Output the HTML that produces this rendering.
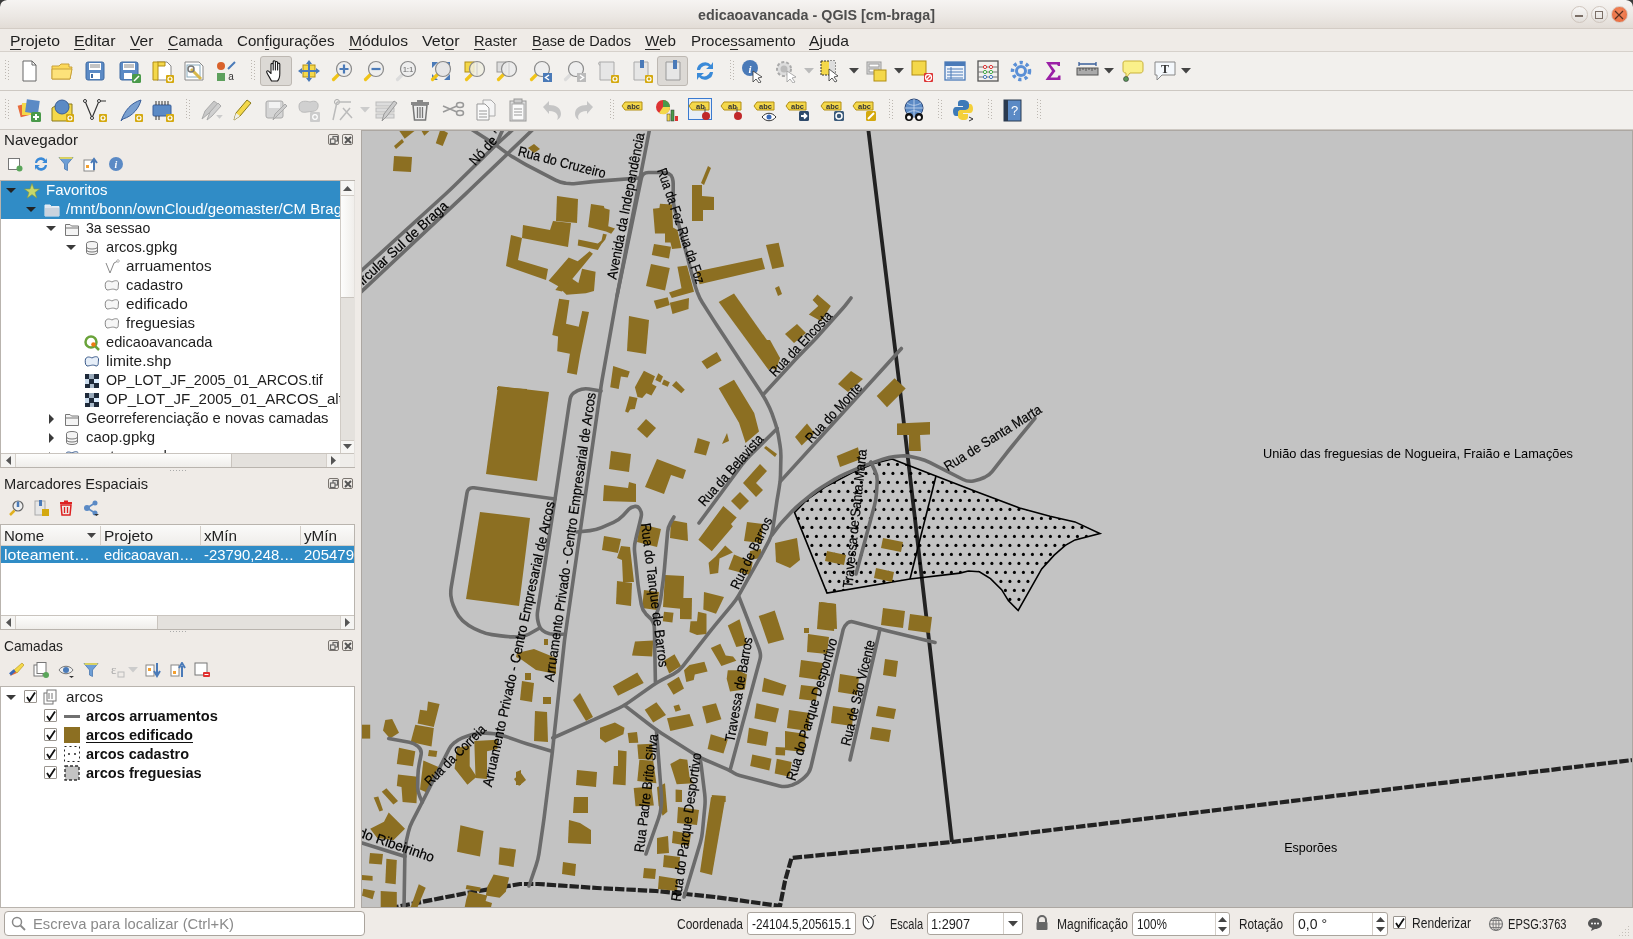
<!DOCTYPE html>
<html><head><meta charset="utf-8">
<style>
*{margin:0;padding:0;box-sizing:border-box}
html,body{width:1633px;height:939px;overflow:hidden;background:#efebe7;font-family:"Liberation Sans",sans-serif;position:relative}
#root{position:absolute;left:0;top:0;width:1633px;height:939px;will-change:transform}
.a{position:absolute}
.t{position:absolute;white-space:nowrap}
svg text{}
</style></head><body>
<div id="root"><div class="a" style="left:0;top:0;width:1633px;height:29px;background:linear-gradient(#f6f4f2,#ebe7e3 60%,#e2dcd6);border-bottom:1px solid #d3ccc5"></div><div class="t" style="left:698px;top:6.82px;font-size:15px;line-height:16.75px;font-weight:bold;color:#4d4d4d;transform:scaleX(0.9540);transform-origin:0 0;">edicaoavancada - QGIS [cm-braga]</div><svg class="a" style="left:0;top:0" width="7" height="7"><path d="M0 0 H7 Q0.5 0.5 0 7 Z" fill="#3a3a3a"/></svg><svg class="a" style="left:1626px;top:0" width="7" height="7"><path d="M7 0 H0 Q6.5 0.5 7 7 Z" fill="#3a3a3a"/></svg><div class="a" style="left:1570.5px;top:6px;width:17px;height:17px;border-radius:50%;background:linear-gradient(#f7f6f5,#e3dfdb);border:1px solid #cfc5bd"></div><div class="a" style="left:1575px;top:15px;width:8px;height:2px;background:#7a6e66"></div><div class="a" style="left:1590.5px;top:6px;width:17px;height:17px;border-radius:50%;background:linear-gradient(#f7f6f5,#e3dfdb);border:1px solid #cfc5bd"></div><div class="a" style="left:1595px;top:11px;width:8px;height:8px;border:1.5px solid #7a6e66"></div><div class="a" style="left:1610.5px;top:6px;width:17px;height:17px;border-radius:50%;background:radial-gradient(circle at 50% 40%,#f58a5e,#e5663a);border:1px solid #d9c9bf"></div><svg class="a" style="left:1614px;top:10px" width="10" height="10"><path d="M1 1 L9 9 M9 1 L1 9" stroke="#5a3020" stroke-width="1.2"/></svg><div class="a" style="left:0;top:29px;width:1633px;height:23px;background:#efebe7;border-bottom:1px solid #d6d1cb"></div><div class="t" style="left:10px;top:33.32px;font-size:15px;line-height:16.75px;color:#1e1e1e;transform:scaleX(1.0520);transform-origin:0 0;">Projeto</div><div class="a" style="left:10.0px;top:48.6px;width:10.5px;height:1.6px;background:#2b2b2b"></div><div class="t" style="left:74px;top:33.32px;font-size:15px;line-height:16.75px;color:#1e1e1e;transform:scaleX(1.0590);transform-origin:0 0;">Editar</div><div class="a" style="left:74.0px;top:48.6px;width:10.6px;height:1.6px;background:#2b2b2b"></div><div class="t" style="left:129.6px;top:33.32px;font-size:15px;line-height:16.75px;color:#1e1e1e;transform:scaleX(1.0392);transform-origin:0 0;">Ver</div><div class="a" style="left:129.6px;top:48.6px;width:10.4px;height:1.6px;background:#2b2b2b"></div><div class="t" style="left:168px;top:33.32px;font-size:15px;line-height:16.75px;color:#1e1e1e;transform:scaleX(0.9612);transform-origin:0 0;">Camada</div><div class="a" style="left:168.0px;top:48.6px;width:10.4px;height:1.6px;background:#2b2b2b"></div><div class="t" style="left:237px;top:33.32px;font-size:15px;line-height:16.75px;color:#1e1e1e;transform:scaleX(1.0080);transform-origin:0 0;">Configurações</div><div class="a" style="left:264.7px;top:48.6px;width:4.2px;height:1.6px;background:#2b2b2b"></div><div class="t" style="left:349px;top:33.32px;font-size:15px;line-height:16.75px;color:#1e1e1e;transform:scaleX(1.0406);transform-origin:0 0;">Módulos</div><div class="a" style="left:349.0px;top:48.6px;width:13.0px;height:1.6px;background:#2b2b2b"></div><div class="t" style="left:422px;top:33.32px;font-size:15px;line-height:16.75px;color:#1e1e1e;transform:scaleX(1.0706);transform-origin:0 0;">Vetor</div><div class="a" style="left:445.2px;top:48.6px;width:8.9px;height:1.6px;background:#2b2b2b"></div><div class="t" style="left:474px;top:33.32px;font-size:15px;line-height:16.75px;color:#1e1e1e;transform:scaleX(0.9733);transform-origin:0 0;">Raster</div><div class="a" style="left:474.0px;top:48.6px;width:10.5px;height:1.6px;background:#2b2b2b"></div><div class="t" style="left:532px;top:33.32px;font-size:15px;line-height:16.75px;color:#1e1e1e;transform:scaleX(0.9652);transform-origin:0 0;">Base de Dados</div><div class="a" style="left:532.0px;top:48.6px;width:9.7px;height:1.6px;background:#2b2b2b"></div><div class="t" style="left:645.4px;top:33.32px;font-size:15px;line-height:16.75px;color:#1e1e1e;transform:scaleX(1.0140);transform-origin:0 0;">Web</div><div class="a" style="left:645.4px;top:48.6px;width:14.4px;height:1.6px;background:#2b2b2b"></div><div class="t" style="left:691px;top:33.32px;font-size:15px;line-height:16.75px;color:#1e1e1e;transform:scaleX(1.0037);transform-origin:0 0;">Processamento</div><div class="a" style="left:730.3px;top:48.6px;width:7.5px;height:1.6px;background:#2b2b2b"></div><div class="t" style="left:809px;top:33.32px;font-size:15px;line-height:16.75px;color:#1e1e1e;transform:scaleX(1.0426);transform-origin:0 0;">Ajuda</div><div class="a" style="left:809.0px;top:48.6px;width:10.4px;height:1.6px;background:#2b2b2b"></div><div class="a" style="left:0;top:52px;width:1633px;height:39px;background:#f2f0ed;border-bottom:1px solid #cdc8c2"></div><div class="a" style="left:0;top:91px;width:1633px;height:39px;background:#f2f0ed;border-bottom:1px solid #cdc8c2"></div><div class="a" style="left:260px;top:56px;width:32px;height:30px;background:#dcd9d5;border:1px solid #bdb8b2;border-radius:3px"></div><div class="a" style="left:657px;top:56px;width:31px;height:30px;background:#dcd9d5;border:1px solid #bdb8b2;border-radius:3px"></div><div class="a" style="left:688px;top:98px;width:24px;height:22px;background:#e8eef6;border:1px solid #3a7ad0"></div><svg class="a" style="left:17.0px;top:58.5px" width="24" height="24" viewBox="0 0 24 24"><path d="M6 2 H15 L19 6 V22 H6 Z" fill="#fff" stroke="#666" stroke-width="1"/><path d="M15 2 V6 H19" fill="none" stroke="#666"/></svg><svg class="a" style="left:50.0px;top:58.5px" width="24" height="24" viewBox="0 0 24 24"><path d="M2 7 H9 L11 5 H19 V8 H22 L20 20 H2 Z" fill="#fcd95a" stroke="#c9a23a" stroke-width="1"/><path d="M2 10 H22 L20 20 H2 Z" fill="#fde27a" stroke="#c9a23a" stroke-width="1"/></svg><svg class="a" style="left:83.0px;top:58.5px" width="24" height="24" viewBox="0 0 24 24"><rect x="3" y="3" width="18" height="18" rx="2" fill="#5b8ac5" stroke="#3e6aa3"/><rect x="6" y="4" width="12" height="7" fill="#fff"/><line x1="7" y1="6" x2="17" y2="6" stroke="#888"/><line x1="7" y1="8" x2="17" y2="8" stroke="#888"/><rect x="7" y="14" width="10" height="6" fill="#fff"/><rect x="8" y="15" width="2" height="4" fill="#3e6aa3"/></svg><svg class="a" style="left:116.6px;top:58.5px" width="24" height="24" viewBox="0 0 24 24"><rect x="3" y="3" width="18" height="18" rx="2" fill="#5b8ac5" stroke="#3e6aa3"/><rect x="6" y="4" width="12" height="7" fill="#fff"/><line x1="7" y1="6" x2="17" y2="6" stroke="#888"/><line x1="7" y1="8" x2="17" y2="8" stroke="#888"/><rect x="7" y="14" width="8" height="6" fill="#fff"/><rect x="15" y="15" width="9" height="9" rx="1.5" fill="#4a9a4a"/><line x1="17" y1="22" x2="22" y2="17" stroke="#fff" stroke-width="1.5"/></svg><svg class="a" style="left:149.5px;top:58.5px" width="24" height="24" viewBox="0 0 24 24"><path d="M7 3 H17 L21 7 V21 H7 Z" fill="#fff" stroke="#888"/><path d="M3 3 H8 V21 H3 Z M8 3 H15 V7 H8" fill="#f4d84a" stroke="#b28e12"/><rect x="16" y="16" width="8" height="8" rx="1" fill="#d4a90f"/><circle cx="20" cy="20" r="2" fill="none" stroke="#fff" stroke-width="1.2"/></svg><svg class="a" style="left:182.0px;top:58.5px" width="24" height="24" viewBox="0 0 24 24"><path d="M3 3 H17 L21 7 V21 H3 Z" fill="#fff" stroke="#888"/><rect x="5" y="6" width="13" height="12" fill="none" stroke="#8ab"/><line x1="9" y1="10" x2="19" y2="20" stroke="#d8b84a" stroke-width="3"/><circle cx="9" cy="10" r="3" fill="none" stroke="#777" stroke-width="1.5"/></svg><svg class="a" style="left:214.0px;top:58.5px" width="24" height="24" viewBox="0 0 24 24"><circle cx="7" cy="7" r="4" fill="#d9622b"/><line x1="14" y1="10" x2="21" y2="3" stroke="#4a7ab8" stroke-width="2"/><rect x="3" y="14" width="8" height="8" fill="#5da05d"/><text x="17" y="21" font-size="10" fill="#333" text-anchor="middle" font-family="Liberation Sans">a</text></svg><svg class="a" style="left:263.7px;top:58.5px" width="24" height="24" viewBox="0 0 24 24"><path d="M7.5 22 C6 19 4 16 2.8 13.5 C2.2 12.2 3.6 11.2 4.8 12.3 L7 14.5 V5.5 C7 4 9.2 4 9.2 5.5 V11 V2.8 C9.2 1.3 11.4 1.3 11.4 2.8 V11 V3.6 C11.4 2.1 13.6 2.1 13.6 3.6 V11 V5.2 C13.6 3.8 15.8 3.8 15.8 5.2 V14.5 C15.8 18 15 20.5 13.5 22 Z" fill="#fff" stroke="#1a1a1a" stroke-width="1.1" stroke-linejoin="round"/></svg><svg class="a" style="left:296.6px;top:58.5px" width="24" height="24" viewBox="0 0 24 24"><rect x="6" y="6" width="12" height="12" fill="#f4d84a" stroke="#b28e12"/><path d="M12 1 L15 5 H9 Z M12 23 L15 19 H9 Z M1 12 L5 9 V15 Z M23 12 L19 9 V15 Z" fill="#4a7ab8"/><path d="M12 4 V20 M4 12 H20" stroke="#4a7ab8" stroke-width="2"/></svg><svg class="a" style="left:329.6px;top:58.5px" width="24" height="24" viewBox="0 0 24 24"><line x1="3" y1="21" x2="9" y2="15" stroke="#333" stroke-width="1"/><line x1="3.5" y1="20.5" x2="9" y2="15" stroke="#f0c419" stroke-width="3.2" stroke-linecap="round"/><circle cx="14" cy="10" r="7.5" fill="#eeeeee" stroke="#8a8a8a" stroke-width="1.2"/><path d="M14 5.5 V14.5 M9.5 10 H18.5" stroke="#4a7ab8" stroke-width="2.2"/></svg><svg class="a" style="left:362.0px;top:58.5px" width="24" height="24" viewBox="0 0 24 24"><line x1="3" y1="21" x2="9" y2="15" stroke="#333" stroke-width="1"/><line x1="3.5" y1="20.5" x2="9" y2="15" stroke="#f0c419" stroke-width="3.2" stroke-linecap="round"/><circle cx="14" cy="10" r="7.5" fill="#eeeeee" stroke="#8a8a8a" stroke-width="1.2"/><path d="M9.5 10 H18.5" stroke="#4a7ab8" stroke-width="2.2"/></svg><svg class="a" style="left:394.0px;top:58.5px" width="24" height="24" viewBox="0 0 24 24"><line x1="3" y1="21" x2="9" y2="15" stroke="#333" stroke-width="1"/><line x1="3.5" y1="20.5" x2="9" y2="15" stroke="#dcdcdc" stroke-width="3.2" stroke-linecap="round"/><circle cx="14" cy="10" r="7.5" fill="#eeeeee" stroke="#8a8a8a" stroke-width="1.2"/><text x="14" y="13" font-size="7" font-weight="bold" fill="#888" text-anchor="middle" font-family="Liberation Sans">1:1</text></svg><svg class="a" style="left:429.0px;top:58.5px" width="24" height="24" viewBox="0 0 24 24"><path d="M3 3 H9 L3 9 Z M21 3 H15 L21 9 Z M3 21 V15 L9 21 Z M21 21 H15 L21 15 Z" fill="#4a7ab8"/><line x1="3" y1="21" x2="9" y2="15" stroke="#333" stroke-width="1"/><line x1="3.5" y1="20.5" x2="9" y2="15" stroke="#f0c419" stroke-width="3.2" stroke-linecap="round"/><circle cx="14" cy="10" r="7.5" fill="#e6e6e6" stroke="#8a8a8a" stroke-width="1.2"/></svg><svg class="a" style="left:462.6px;top:58.5px" width="24" height="24" viewBox="0 0 24 24"><rect x="2" y="3" width="9" height="10" fill="#f4d84a" stroke="#b28e12"/><line x1="3" y1="21" x2="9" y2="15" stroke="#333" stroke-width="1"/><line x1="3.5" y1="20.5" x2="9" y2="15" stroke="#f0c419" stroke-width="3.2" stroke-linecap="round"/><circle cx="14" cy="10" r="7.5" fill="rgba(240,238,225,0.85)" stroke="#8a8a8a" stroke-width="1.2"/><line x1="14" y1="3" x2="14" y2="17" stroke="#ccc"/></svg><svg class="a" style="left:494.7px;top:58.5px" width="24" height="24" viewBox="0 0 24 24"><rect x="2" y="3" width="9" height="10" fill="#ddd" stroke="#999"/><line x1="3" y1="21" x2="9" y2="15" stroke="#333" stroke-width="1"/><line x1="3.5" y1="20.5" x2="9" y2="15" stroke="#f0c419" stroke-width="3.2" stroke-linecap="round"/><circle cx="14" cy="10" r="7.5" fill="rgba(235,235,235,0.9)" stroke="#8a8a8a" stroke-width="1.2"/><line x1="14" y1="3" x2="14" y2="17" stroke="#ccc"/></svg><svg class="a" style="left:528.0px;top:58.5px" width="24" height="24" viewBox="0 0 24 24"><line x1="3" y1="21" x2="9" y2="15" stroke="#333" stroke-width="1"/><line x1="3.5" y1="20.5" x2="9" y2="15" stroke="#f0c419" stroke-width="3.2" stroke-linecap="round"/><circle cx="14" cy="10" r="7.5" fill="#eeeeee" stroke="#8a8a8a" stroke-width="1.2"/><rect x="15" y="14" width="9" height="9" fill="#4a7ab8"/><path d="M21 16 L17.5 18.5 L21 21" fill="none" stroke="#fff" stroke-width="1.5"/></svg><svg class="a" style="left:561.6px;top:58.5px" width="24" height="24" viewBox="0 0 24 24"><line x1="3" y1="21" x2="9" y2="15" stroke="#333" stroke-width="1"/><line x1="3.5" y1="20.5" x2="9" y2="15" stroke="#dcdcdc" stroke-width="3.2" stroke-linecap="round"/><circle cx="14" cy="10" r="7.5" fill="#eeeeee" stroke="#8a8a8a" stroke-width="1.2"/><rect x="15" y="14" width="9" height="9" fill="#bbb"/><path d="M18 16 L21.5 18.5 L18 21" fill="none" stroke="#fff" stroke-width="1.5"/></svg><svg class="a" style="left:595.0px;top:58.5px" width="24" height="24" viewBox="0 0 24 24"><path d="M5 3 H19 V21 H5 Z" fill="#e6e6e6" stroke="#aaa"/><path d="M5 3 C3 3 3 6 5 6" fill="none" stroke="#aaa"/><rect x="16" y="16" width="8" height="8" rx="1" fill="#d4a90f"/><circle cx="20" cy="20" r="2" fill="none" stroke="#fff" stroke-width="1.2"/></svg><svg class="a" style="left:628.5px;top:58.5px" width="24" height="24" viewBox="0 0 24 24"><path d="M5 3 H19 V21 H5 Z" fill="#e6e6e6" stroke="#aaa"/><rect x="11" y="1" width="4" height="8" fill="#4a7ab8"/><rect x="16" y="16" width="8" height="8" rx="1" fill="#d4a90f"/><circle cx="20" cy="20" r="2" fill="none" stroke="#fff" stroke-width="1.2"/></svg><svg class="a" style="left:660.6px;top:58.5px" width="24" height="24" viewBox="0 0 24 24"><path d="M5 3 H19 V21 H5 Z" fill="#e6e6e6" stroke="#999"/><rect x="12" y="1" width="4" height="9" fill="#4a7ab8"/></svg><svg class="a" style="left:692.8px;top:58.5px" width="24" height="24" viewBox="0 0 24 24"><path d="M4 11 A8 8 0 0 1 18 6 L20 3 V10 H13 L16 7.5 A6 6 0 0 0 7 11 Z" fill="#3a8ad8"/><path d="M20 13 A8 8 0 0 1 6 18 L4 21 V14 H11 L8 16.5 A6 6 0 0 0 17 13 Z" fill="#3a8ad8"/></svg><svg class="a" style="left:740.0px;top:58.5px" width="24" height="24" viewBox="0 0 24 24"><circle cx="10" cy="9" r="8" fill="#4a7ab8"/><text x="10" y="13.5" font-size="11" font-weight="bold" font-style="italic" fill="#fff" text-anchor="middle" font-family="Liberation Serif">i</text><path d="M13 12 L13 23 L16 20 L19 24 L21 23 L18 19 L22 18 Z" fill="#fff" stroke="#333" stroke-width="0.8"/></svg><svg class="a" style="left:773.8px;top:58.5px" width="24" height="24" viewBox="0 0 24 24"><circle cx="10" cy="10" r="7" fill="#ddd" stroke="#aaa" stroke-width="2" stroke-dasharray="3 2"/><circle cx="10" cy="10" r="3.5" fill="#bbb"/><path d="M13 12 L13 23 L16 20 L19 24 L21 23 L18 19 L22 18 Z" fill="#fff" stroke="#999" stroke-width="0.8"/></svg><svg class="a" style="left:819.0px;top:58.5px" width="24" height="24" viewBox="0 0 24 24"><rect x="2" y="2" width="14" height="14" fill="#f4d84a" stroke="#333" stroke-dasharray="2 1"/><rect x="10" y="2" width="6" height="14" fill="#ddd"/><path d="M10 10 L10 22 L13 19 L16 23 L18 22 L15 18 L19 17 Z" fill="#fff" stroke="#333" stroke-width="0.8"/></svg><svg class="a" style="left:865.0px;top:58.5px" width="24" height="24" viewBox="0 0 24 24"><rect x="2" y="3" width="14" height="12" fill="#ddd" stroke="#999"/><rect x="4" y="5" width="10" height="3" fill="#fff" stroke="#999"/><rect x="4" y="10" width="10" height="3" fill="#fff" stroke="#999"/><rect x="9" y="11" width="12" height="11" fill="#f4d84a" stroke="#b28e12"/></svg><svg class="a" style="left:910.0px;top:58.5px" width="24" height="24" viewBox="0 0 24 24"><rect x="2" y="2" width="14" height="14" fill="#f4d84a" stroke="#b28e12"/><rect x="14" y="14" width="9" height="9" rx="1" fill="#d33"/><circle cx="18.5" cy="18.5" r="3" fill="none" stroke="#fff" stroke-width="1.3"/><line x1="16.5" y1="20.5" x2="20.5" y2="16.5" stroke="#fff" stroke-width="1.3"/></svg><svg class="a" style="left:943.0px;top:58.5px" width="24" height="24" viewBox="0 0 24 24"><rect x="2" y="3" width="20" height="18" fill="#eef3fa" stroke="#4a7ab8" stroke-width="1.3"/><rect x="2" y="3" width="20" height="4" fill="#4a7ab8"/><path d="M4 10 H20 M4 13 H20 M4 16 H20 M4 19 H20 M8 8 V20" stroke="#4a7ab8" stroke-width="1"/></svg><svg class="a" style="left:975.8px;top:58.5px" width="24" height="24" viewBox="0 0 24 24"><rect x="2" y="2" width="20" height="20" fill="none" stroke="#555" stroke-width="1.3"/><path d="M2 8 H22 M2 13 H22 M2 18 H22" stroke="#777"/><circle cx="9" cy="8" r="1.6" fill="#fff" stroke="#d33"/><circle cx="15" cy="8" r="1.6" fill="#fff" stroke="#d33"/><circle cx="9" cy="13" r="1.6" fill="#fff" stroke="#4a4"/><circle cx="15" cy="13" r="1.6" fill="#fff" stroke="#4a4"/><circle cx="9" cy="18" r="1.6" fill="#fff" stroke="#47b"/><circle cx="15" cy="18" r="1.6" fill="#fff" stroke="#47b"/></svg><svg class="a" style="left:1008.7px;top:58.5px" width="24" height="24" viewBox="0 0 24 24"><circle cx="12" cy="12" r="8.5" fill="none" stroke="#5a8fd6" stroke-width="3.5" stroke-dasharray="3.2 3.2"/><circle cx="12" cy="12" r="6" fill="#5a8fd6"/><circle cx="12" cy="12" r="3" fill="#f2f0ed"/></svg><svg class="a" style="left:1041.0px;top:58.5px" width="24" height="24" viewBox="0 0 24 24"><path d="M5 3 H19 V7 H17 L16 5.5 H9.5 L14.5 12 L9.5 18.5 H16.5 L17.5 16.5 H19.5 V21 H4.5 L11 12 Z" fill="#9a1fa6"/></svg><svg class="a" style="left:1074.8px;top:58.5px" width="24" height="24" viewBox="0 0 24 24"><rect x="2" y="9" width="21" height="7" fill="#aaa" stroke="#555"/><path d="M5 9 V12 M8 9 V11 M11 9 V12 M14 9 V11 M17 9 V12 M20 9 V11" stroke="#555"/><path d="M4 5 H21 M4 3 V7 M21 3 V7" stroke="#3a5f9a" stroke-width="1.3"/></svg><svg class="a" style="left:1119.8px;top:58.5px" width="24" height="24" viewBox="0 0 24 24"><path d="M3 4 C3 2 5 2 6 2 H20 C22 2 23 3 23 5 V11 C23 13 22 14 20 14 H10 L6 19 V14 C4 14 3 13 3 11 Z" fill="#faf08a" stroke="#c9b23a"/><circle cx="6" cy="20" r="2.5" fill="#5a9a5a" stroke="#333" stroke-width="0.6"/></svg><svg class="a" style="left:1153.0px;top:58.5px" width="24" height="24" viewBox="0 0 24 24"><path d="M2 3 H22 V16 H9 L4 21 V16 H2 Z" fill="#f4f8fc" stroke="#888"/><text x="12" y="13.5" font-size="12" font-weight="bold" text-anchor="middle" fill="#333" font-family="Liberation Serif">T</text></svg><svg class="a" style="left:5px;top:60px" width="4" height="22" fill="#bcb7b1"><rect x="0" y="0" width="1" height="1"/><rect x="3" y="1" width="1" height="1"/><rect x="0" y="3" width="1" height="1"/><rect x="3" y="4" width="1" height="1"/><rect x="0" y="6" width="1" height="1"/><rect x="3" y="7" width="1" height="1"/><rect x="0" y="9" width="1" height="1"/><rect x="3" y="10" width="1" height="1"/><rect x="0" y="12" width="1" height="1"/><rect x="3" y="13" width="1" height="1"/><rect x="0" y="15" width="1" height="1"/><rect x="3" y="16" width="1" height="1"/><rect x="0" y="18" width="1" height="1"/><rect x="3" y="19" width="1" height="1"/></svg><svg class="a" style="left:251px;top:60px" width="4" height="22" fill="#bcb7b1"><rect x="0" y="0" width="1" height="1"/><rect x="3" y="1" width="1" height="1"/><rect x="0" y="3" width="1" height="1"/><rect x="3" y="4" width="1" height="1"/><rect x="0" y="6" width="1" height="1"/><rect x="3" y="7" width="1" height="1"/><rect x="0" y="9" width="1" height="1"/><rect x="3" y="10" width="1" height="1"/><rect x="0" y="12" width="1" height="1"/><rect x="3" y="13" width="1" height="1"/><rect x="0" y="15" width="1" height="1"/><rect x="3" y="16" width="1" height="1"/><rect x="0" y="18" width="1" height="1"/><rect x="3" y="19" width="1" height="1"/></svg><svg class="a" style="left:730px;top:60px" width="4" height="22" fill="#bcb7b1"><rect x="0" y="0" width="1" height="1"/><rect x="3" y="1" width="1" height="1"/><rect x="0" y="3" width="1" height="1"/><rect x="3" y="4" width="1" height="1"/><rect x="0" y="6" width="1" height="1"/><rect x="3" y="7" width="1" height="1"/><rect x="0" y="9" width="1" height="1"/><rect x="3" y="10" width="1" height="1"/><rect x="0" y="12" width="1" height="1"/><rect x="3" y="13" width="1" height="1"/><rect x="0" y="15" width="1" height="1"/><rect x="3" y="16" width="1" height="1"/><rect x="0" y="18" width="1" height="1"/><rect x="3" y="19" width="1" height="1"/></svg><svg class="a" style="left:804px;top:67.5px" width="10" height="6" viewBox="0 0 10 6"><path d="M0 0 H10 L5 5.5 Z" fill="#bbb"/></svg><svg class="a" style="left:848.5px;top:67.5px" width="10" height="6" viewBox="0 0 10 6"><path d="M0 0 H10 L5 5.5 Z" fill="#444"/></svg><svg class="a" style="left:893.5px;top:67.5px" width="10" height="6" viewBox="0 0 10 6"><path d="M0 0 H10 L5 5.5 Z" fill="#444"/></svg><svg class="a" style="left:1103.6px;top:67.5px" width="10" height="6" viewBox="0 0 10 6"><path d="M0 0 H10 L5 5.5 Z" fill="#444"/></svg><svg class="a" style="left:1181px;top:67.5px" width="10" height="6" viewBox="0 0 10 6"><path d="M0 0 H10 L5 5.5 Z" fill="#444"/></svg><svg class="a" style="left:17.0px;top:98.0px" width="24" height="24" viewBox="0 0 24 24"><rect x="2" y="6" width="12" height="12" fill="#e86a3a" transform="rotate(-15 8 12)"/><rect x="5" y="5" width="12" height="12" fill="#f4d84a"/><rect x="9" y="2" width="13" height="13" fill="#5b8ac5" transform="rotate(8 15 8)"/><rect x="14" y="14" width="10" height="10" rx="1.5" fill="#4a9a4a"/><path d="M19 16 V22 M16 19 H22" stroke="#fff" stroke-width="2"/></svg><svg class="a" style="left:49.7px;top:98.0px" width="24" height="24" viewBox="0 0 24 24"><path d="M2 10 L8 6 H22 V20 L16 23 H2 Z" fill="#f4d84a" stroke="#8a7a1a"/><circle cx="12" cy="9" r="7" fill="#5b8ac5" stroke="#3a5f9a"/><rect x="16" y="16" width="8" height="8" rx="1" fill="#d4a90f"/><circle cx="20" cy="20" r="2" fill="none" stroke="#fff" stroke-width="1.2"/></svg><svg class="a" style="left:83.0px;top:98.0px" width="24" height="24" viewBox="0 0 24 24"><path d="M2 3 L9 20 L16 3 L23 3" fill="none" stroke="#333" stroke-width="1.2"/><circle cx="2" cy="3" r="1.5" fill="#fff" stroke="#333"/><circle cx="9" cy="20" r="1.5" fill="#fff" stroke="#333"/><circle cx="16" cy="3" r="1.5" fill="#fff" stroke="#333"/><rect x="16" y="16" width="8" height="8" rx="1" fill="#d4a90f"/><circle cx="20" cy="20" r="2" fill="none" stroke="#fff" stroke-width="1.2"/></svg><svg class="a" style="left:119.0px;top:98.0px" width="24" height="24" viewBox="0 0 24 24"><path d="M2 23 C6 12 12 5 22 2 C20 10 14 18 4 21 Z" fill="#7aa0d0" stroke="#3a5f9a"/><rect x="16" y="16" width="8" height="8" rx="1" fill="#d4a90f"/><circle cx="20" cy="20" r="2" fill="none" stroke="#fff" stroke-width="1.2"/></svg><svg class="a" style="left:150.0px;top:98.0px" width="24" height="24" viewBox="0 0 24 24"><rect x="3" y="7" width="18" height="11" rx="1" fill="#5b8ac5" stroke="#3a5f9a"/><path d="M6 3 V7 M9 3 V7 M12 3 V7 M15 3 V7 M18 3 V7 M6 18 V22 M9 18 V22" stroke="#333"/><rect x="16" y="16" width="8" height="8" rx="1" fill="#d4a90f"/><circle cx="20" cy="20" r="2" fill="none" stroke="#fff" stroke-width="1.2"/></svg><svg class="a" style="left:199.0px;top:98.0px" width="24" height="24" viewBox="0 0 24 24"><path d="M3 21 L6 13 L15 3 L19 6 L9 16 Z" fill="#c8c8c8" stroke="#aaa"/><path d="M8 22 L11 14 L19 5 L22 8 L13 18 Z" fill="#d0d0d0" stroke="#aaa"/></svg><svg class="a" style="left:230.0px;top:98.0px" width="24" height="24" viewBox="0 0 24 24"><path d="M4 22 L6 15 L17 2 L21 5 L10 18 Z" fill="#f4d84a" stroke="#8a7a1a"/><path d="M4 22 L6 15 L10 18 Z" fill="#eee"/></svg><svg class="a" style="left:263.0px;top:98.0px" width="24" height="24" viewBox="0 0 24 24"><rect x="3" y="3" width="17" height="17" rx="2" fill="#d5d5d5" stroke="#aaa"/><rect x="6" y="4" width="11" height="6" fill="#f2f2f2"/><path d="M10 22 L12 16 L22 6 L24 8 L14 18 Z" fill="#ccc" stroke="#aaa"/></svg><svg class="a" style="left:296.6px;top:98.0px" width="24" height="24" viewBox="0 0 24 24"><path d="M2 8 C2 2 10 3 13 4 C18 2 22 4 21 9 C20 14 16 13 10 14 C4 15 2 13 2 8 Z" fill="#d0d0d0" stroke="#bbb"/><rect x="13" y="14" width="10" height="10" rx="1" fill="#ccc"/><circle cx="18" cy="19" r="2.3" fill="none" stroke="#fff" stroke-width="1.2"/></svg><svg class="a" style="left:330.0px;top:98.0px" width="24" height="24" viewBox="0 0 24 24"><circle cx="7" cy="4" r="2.5" fill="none" stroke="#aaa"/><path d="M7 4 H21 M7 4 L3 22 M10 22 L20 10 M13 10 L22 20" stroke="#bbb" stroke-width="1.5"/></svg><svg class="a" style="left:374.0px;top:98.0px" width="24" height="24" viewBox="0 0 24 24"><rect x="2" y="4" width="18" height="4" fill="#ddd" stroke="#bbb"/><rect x="2" y="10" width="18" height="4" fill="#ddd" stroke="#bbb"/><rect x="2" y="16" width="18" height="4" fill="#ddd" stroke="#bbb"/><path d="M8 23 L10 16 L20 3 L23 5 L13 18 Z" fill="#ccc" stroke="#999"/></svg><svg class="a" style="left:408.0px;top:98.0px" width="24" height="24" viewBox="0 0 24 24"><path d="M5 7 H19 L17.5 22 H6.5 Z" fill="#eee" stroke="#777" stroke-width="1.5"/><rect x="3" y="4" width="18" height="3" fill="#888"/><rect x="9" y="2" width="6" height="2" fill="#888"/><path d="M9.5 9 V20 M12 9 V20 M14.5 9 V20" stroke="#777" stroke-width="1.3"/></svg><svg class="a" style="left:440.7px;top:98.0px" width="24" height="24" viewBox="0 0 24 24"><path d="M2 8 L16 14 M2 14 L16 8" stroke="#999" stroke-width="1.5"/><ellipse cx="19" cy="7" rx="3.5" ry="2.5" fill="none" stroke="#999" stroke-width="1.5"/><ellipse cx="19" cy="15" rx="3.5" ry="2.5" fill="none" stroke="#999" stroke-width="1.5"/></svg><svg class="a" style="left:474.0px;top:98.0px" width="24" height="24" viewBox="0 0 24 24"><path d="M9 2 H17 L21 6 V18 H9 Z" fill="#f4f4f4" stroke="#aaa"/><path d="M3 6 H11 L15 10 V22 H3 Z" fill="#fafafa" stroke="#999"/><path d="M5 13 H13 M5 16 H13 M5 19 H13" stroke="#999"/></svg><svg class="a" style="left:506.0px;top:98.0px" width="24" height="24" viewBox="0 0 24 24"><rect x="4" y="3" width="16" height="20" fill="#ddd" stroke="#999"/><rect x="6" y="6" width="12" height="16" fill="#fafafa" stroke="#aaa"/><rect x="8" y="1" width="8" height="4" fill="#ccc" stroke="#999"/><path d="M8 11 H16 M8 14 H16 M8 17 H16" stroke="#999"/></svg><svg class="a" style="left:539.7px;top:98.0px" width="24" height="24" viewBox="0 0 24 24"><path d="M3 9 L9 3 V7 C16 7 21 10 21 16 C21 19 19 21 17 22 C19 19 18 13 9 13 V16 Z" fill="#c5c5c5"/></svg><svg class="a" style="left:572.0px;top:98.0px" width="24" height="24" viewBox="0 0 24 24"><path d="M21 9 L15 3 V7 C8 7 3 10 3 16 C3 19 5 21 7 22 C5 19 6 13 15 13 V16 Z" fill="#c5c5c5"/></svg><svg class="a" style="left:620.8px;top:98.0px" width="24" height="24" viewBox="0 0 24 24"><path d="M4 4 H21 V12 H4 L1 8 Z" fill="#f4d84a" stroke="#b28e12" stroke-width="1"/><text x="12.5" y="10.8" font-size="7.5" font-weight="bold" text-anchor="middle" fill="#333" font-family="Liberation Sans">abc</text></svg><svg class="a" style="left:654.0px;top:98.0px" width="24" height="24" viewBox="0 0 24 24"><circle cx="9" cy="9" r="7" fill="#d33"/><path d="M9 9 L9 2 A7 7 0 0 1 16 9 Z" fill="#4a9a4a"/><path d="M9 9 L16 9 A7 7 0 0 1 5 15 Z" fill="#f4d84a"/><rect x="13" y="16" width="3" height="7" fill="#f4d84a" stroke="#333" stroke-width="0.5"/><rect x="17" y="12" width="3" height="11" fill="#4a9a4a" stroke="#333" stroke-width="0.5"/><rect x="21" y="18" width="3" height="5" fill="#d33"/></svg><svg class="a" style="left:687.6px;top:98.0px" width="24" height="24" viewBox="0 0 24 24"><path d="M4 4 H21 V12 H4 L1 8 Z" fill="#f4d84a" stroke="#b28e12" stroke-width="1"/><text x="12.5" y="10.8" font-size="7.5" font-weight="bold" text-anchor="middle" fill="#333" font-family="Liberation Sans">ab</text><line x1="17" y1="9" x2="17" y2="16" stroke="#555"/><circle cx="18" cy="18" r="4" fill="#c0282a"/></svg><svg class="a" style="left:719.8px;top:98.0px" width="24" height="24" viewBox="0 0 24 24"><path d="M4 4 H21 V12 H4 L1 8 Z" fill="#f4d84a" stroke="#b28e12" stroke-width="1"/><text x="12.5" y="10.8" font-size="7.5" font-weight="bold" text-anchor="middle" fill="#333" font-family="Liberation Sans">ab</text><line x1="17" y1="9" x2="17" y2="16" stroke="#555"/><circle cx="18" cy="18" r="4" fill="#c0282a"/></svg><svg class="a" style="left:753.0px;top:98.0px" width="24" height="24" viewBox="0 0 24 24"><path d="M4 4 H21 V12 H4 L1 8 Z" fill="#f4d84a" stroke="#b28e12" stroke-width="1"/><text x="12.5" y="10.8" font-size="7.5" font-weight="bold" text-anchor="middle" fill="#333" font-family="Liberation Sans">abc</text><path d="M9 19 C13 14 19 14 23 19 C19 24 13 24 9 19 Z" fill="#fff" stroke="#333"/><circle cx="16" cy="19" r="2.5" fill="#3a6ab8"/></svg><svg class="a" style="left:785.0px;top:98.0px" width="24" height="24" viewBox="0 0 24 24"><path d="M4 4 H21 V12 H4 L1 8 Z" fill="#f4d84a" stroke="#b28e12" stroke-width="1"/><text x="12.5" y="10.8" font-size="7.5" font-weight="bold" text-anchor="middle" fill="#333" font-family="Liberation Sans">abc</text><rect x="14" y="13" width="10" height="10" rx="1.5" fill="#2e4a6a"/><path d="M16 18 H21 M19 15.5 L21.5 18 L19 20.5" stroke="#fff" stroke-width="1.8" fill="none"/></svg><svg class="a" style="left:820.0px;top:98.0px" width="24" height="24" viewBox="0 0 24 24"><path d="M4 4 H21 V12 H4 L1 8 Z" fill="#f4d84a" stroke="#b28e12" stroke-width="1"/><text x="12.5" y="10.8" font-size="7.5" font-weight="bold" text-anchor="middle" fill="#333" font-family="Liberation Sans">abc</text><rect x="14" y="13" width="10" height="10" rx="1.5" fill="#3a5a7a"/><circle cx="19" cy="18" r="3" fill="none" stroke="#fff" stroke-width="1.5"/></svg><svg class="a" style="left:852.0px;top:98.0px" width="24" height="24" viewBox="0 0 24 24"><path d="M4 4 H21 V12 H4 L1 8 Z" fill="#f4d84a" stroke="#b28e12" stroke-width="1"/><text x="12.5" y="10.8" font-size="7.5" font-weight="bold" text-anchor="middle" fill="#333" font-family="Liberation Sans">abc</text><rect x="14" y="13" width="10" height="10" rx="1.5" fill="#d4a90f"/><path d="M16 21 L22 15" stroke="#fff" stroke-width="2"/></svg><svg class="a" style="left:902.0px;top:98.0px" width="24" height="24" viewBox="0 0 24 24"><circle cx="12" cy="10" r="9" fill="#5b8ac5" stroke="#2e4a7a"/><path d="M3 10 H21 M12 1 V19 M5 5 C10 8 14 8 19 5 M5 15 C10 12 14 12 19 15" stroke="#c8d8ef" stroke-width="0.8" fill="none"/><circle cx="7" cy="19" r="4" fill="#111"/><circle cx="17" cy="19" r="4" fill="#111"/><circle cx="7" cy="19.5" r="2" fill="#fff"/><circle cx="17" cy="19.5" r="2" fill="#fff"/></svg><svg class="a" style="left:950.8px;top:98.0px" width="24" height="24" viewBox="0 0 24 24"><path d="M11.5 2 C7 2 7 4 7 6 V8 H12 V9 H5 C3 9 2 11 2 13 C2 16 3 18 5 18 H7 V15 C7 13 9 12 11 12 H15 C17 12 18 11 18 9 V6 C18 4 16 2 11.5 2 Z" fill="#3d7ab8"/><path d="M12.5 22 C17 22 17 20 17 18 V16 H12 V15 H19 C21 15 22 13 22 11 C22 8 21 6 19 6 H18 V9 C18 11 16 12 14 12 H10 C8 12 7 13 7 15 V18 C7 20 9 22 12.5 22 Z" fill="#f4d03a"/><path d="M18 19 L22 21 L18 23" stroke="#333" fill="none"/></svg><svg class="a" style="left:999.7px;top:98.0px" width="24" height="24" viewBox="0 0 24 24"><rect x="4" y="2" width="17" height="21" fill="#5b8ac5" stroke="#2a3a50"/><rect x="4" y="2" width="4" height="21" fill="#2a3a50"/><text x="14.5" y="17" font-size="13" fill="#fff" text-anchor="middle" font-family="Liberation Sans">?</text></svg><svg class="a" style="left:5px;top:99px" width="4" height="22" fill="#bcb7b1"><rect x="0" y="0" width="1" height="1"/><rect x="3" y="1" width="1" height="1"/><rect x="0" y="3" width="1" height="1"/><rect x="3" y="4" width="1" height="1"/><rect x="0" y="6" width="1" height="1"/><rect x="3" y="7" width="1" height="1"/><rect x="0" y="9" width="1" height="1"/><rect x="3" y="10" width="1" height="1"/><rect x="0" y="12" width="1" height="1"/><rect x="3" y="13" width="1" height="1"/><rect x="0" y="15" width="1" height="1"/><rect x="3" y="16" width="1" height="1"/><rect x="0" y="18" width="1" height="1"/><rect x="3" y="19" width="1" height="1"/></svg><svg class="a" style="left:186px;top:99px" width="4" height="22" fill="#bcb7b1"><rect x="0" y="0" width="1" height="1"/><rect x="3" y="1" width="1" height="1"/><rect x="0" y="3" width="1" height="1"/><rect x="3" y="4" width="1" height="1"/><rect x="0" y="6" width="1" height="1"/><rect x="3" y="7" width="1" height="1"/><rect x="0" y="9" width="1" height="1"/><rect x="3" y="10" width="1" height="1"/><rect x="0" y="12" width="1" height="1"/><rect x="3" y="13" width="1" height="1"/><rect x="0" y="15" width="1" height="1"/><rect x="3" y="16" width="1" height="1"/><rect x="0" y="18" width="1" height="1"/><rect x="3" y="19" width="1" height="1"/></svg><svg class="a" style="left:610px;top:99px" width="4" height="22" fill="#bcb7b1"><rect x="0" y="0" width="1" height="1"/><rect x="3" y="1" width="1" height="1"/><rect x="0" y="3" width="1" height="1"/><rect x="3" y="4" width="1" height="1"/><rect x="0" y="6" width="1" height="1"/><rect x="3" y="7" width="1" height="1"/><rect x="0" y="9" width="1" height="1"/><rect x="3" y="10" width="1" height="1"/><rect x="0" y="12" width="1" height="1"/><rect x="3" y="13" width="1" height="1"/><rect x="0" y="15" width="1" height="1"/><rect x="3" y="16" width="1" height="1"/><rect x="0" y="18" width="1" height="1"/><rect x="3" y="19" width="1" height="1"/></svg><svg class="a" style="left:889px;top:99px" width="4" height="22" fill="#bcb7b1"><rect x="0" y="0" width="1" height="1"/><rect x="3" y="1" width="1" height="1"/><rect x="0" y="3" width="1" height="1"/><rect x="3" y="4" width="1" height="1"/><rect x="0" y="6" width="1" height="1"/><rect x="3" y="7" width="1" height="1"/><rect x="0" y="9" width="1" height="1"/><rect x="3" y="10" width="1" height="1"/><rect x="0" y="12" width="1" height="1"/><rect x="3" y="13" width="1" height="1"/><rect x="0" y="15" width="1" height="1"/><rect x="3" y="16" width="1" height="1"/><rect x="0" y="18" width="1" height="1"/><rect x="3" y="19" width="1" height="1"/></svg><svg class="a" style="left:938px;top:99px" width="4" height="22" fill="#bcb7b1"><rect x="0" y="0" width="1" height="1"/><rect x="3" y="1" width="1" height="1"/><rect x="0" y="3" width="1" height="1"/><rect x="3" y="4" width="1" height="1"/><rect x="0" y="6" width="1" height="1"/><rect x="3" y="7" width="1" height="1"/><rect x="0" y="9" width="1" height="1"/><rect x="3" y="10" width="1" height="1"/><rect x="0" y="12" width="1" height="1"/><rect x="3" y="13" width="1" height="1"/><rect x="0" y="15" width="1" height="1"/><rect x="3" y="16" width="1" height="1"/><rect x="0" y="18" width="1" height="1"/><rect x="3" y="19" width="1" height="1"/></svg><svg class="a" style="left:988px;top:99px" width="4" height="22" fill="#bcb7b1"><rect x="0" y="0" width="1" height="1"/><rect x="3" y="1" width="1" height="1"/><rect x="0" y="3" width="1" height="1"/><rect x="3" y="4" width="1" height="1"/><rect x="0" y="6" width="1" height="1"/><rect x="3" y="7" width="1" height="1"/><rect x="0" y="9" width="1" height="1"/><rect x="3" y="10" width="1" height="1"/><rect x="0" y="12" width="1" height="1"/><rect x="3" y="13" width="1" height="1"/><rect x="0" y="15" width="1" height="1"/><rect x="3" y="16" width="1" height="1"/><rect x="0" y="18" width="1" height="1"/><rect x="3" y="19" width="1" height="1"/></svg><svg class="a" style="left:1037px;top:99px" width="4" height="22" fill="#bcb7b1"><rect x="0" y="0" width="1" height="1"/><rect x="3" y="1" width="1" height="1"/><rect x="0" y="3" width="1" height="1"/><rect x="3" y="4" width="1" height="1"/><rect x="0" y="6" width="1" height="1"/><rect x="3" y="7" width="1" height="1"/><rect x="0" y="9" width="1" height="1"/><rect x="3" y="10" width="1" height="1"/><rect x="0" y="12" width="1" height="1"/><rect x="3" y="13" width="1" height="1"/><rect x="0" y="15" width="1" height="1"/><rect x="3" y="16" width="1" height="1"/><rect x="0" y="18" width="1" height="1"/><rect x="3" y="19" width="1" height="1"/></svg><svg class="a" style="left:360px;top:107px" width="10" height="6" viewBox="0 0 10 6"><path d="M0 0 H10 L5 5.5 Z" fill="#ccc"/></svg><svg class="a" style="left:216px;top:115px" width="7" height="4" viewBox="0 0 10 6"><path d="M0 0 H10 L5 5.5 Z" fill="#ccc"/></svg><div class="a" style="left:0;top:181px;width:340px;height:272px;overflow:hidden"></div><div class="t" style="left:4px;top:131.83px;font-size:15px;line-height:16.75px;color:#1e1e1e;transform:scaleX(1.0084);transform-origin:0 0;">Navegador</div><div class="a" style="left:328px;top:134px;width:11px;height:11px;border:1px solid #7a7570;border-radius:2px"></div><svg class="a" style="left:329px;top:135px" width="10" height="10" viewBox="0 0 10 10"><rect x="4" y="1.5" width="4.5" height="4.5" fill="none" stroke="#666" stroke-width="1.2"/><rect x="1.5" y="4" width="4.5" height="4.5" fill="#efebe7" stroke="#666" stroke-width="1.2"/></svg><div class="a" style="left:342px;top:134px;width:11px;height:11px;border:1px solid #7a7570;border-radius:2px"></div><svg class="a" style="left:343px;top:135px" width="10" height="10" viewBox="0 0 10 10"><path d="M2 2 L8 8 M8 2 L2 8" stroke="#555" stroke-width="2"/></svg><svg class="a" style="left:7px;top:156px" width="16" height="16" viewBox="0 0 16 16"><rect x="1.5" y="2.5" width="11" height="11" fill="#fff" stroke="#777"/><circle cx="12.5" cy="12.5" r="3" fill="#5aa55a"/></svg><svg class="a" style="left:33px;top:156px" width="16" height="16" viewBox="0 0 16 16"><path d="M2 7 A6 6 0 0 1 13 4 L14 2 V7 H9 L11 5.5 A4 4 0 0 0 4 7 Z M14 9 A6 6 0 0 1 3 12 L2 14 V9 H7 L5 10.5 A4 4 0 0 0 12 9 Z" fill="#3a8ad8"/></svg><svg class="a" style="left:58px;top:156px" width="16" height="16" viewBox="0 0 16 16"><path d="M1 1.5 H15 L9.5 8 V14.5 L6.5 13 V8 Z" fill="#6d9ed6" stroke="#4a78b0" stroke-width="0.8"/><rect x="1.5" y="1.2" width="13" height="1.6" fill="#f4e04a"/></svg><svg class="a" style="left:83px;top:156px" width="16" height="16" viewBox="0 0 16 16"><rect x="1" y="4" width="10" height="11" fill="#fff" stroke="#888"/><rect x="3" y="9" width="3" height="3" fill="#f4a030"/><path d="M11 14 V5 M8 7 L11 3 L14 7" stroke="#4a7ab8" stroke-width="2" fill="none"/></svg><svg class="a" style="left:108px;top:156px" width="16" height="16" viewBox="0 0 16 16"><circle cx="8" cy="8" r="7" fill="#5b8ac5"/><text x="8" y="12" font-size="10" font-style="italic" font-weight="bold" fill="#fff" text-anchor="middle" font-family="Liberation Serif">i</text></svg><div class="a" style="left:0;top:180px;width:355px;height:288px;background:#fff;border:1px solid #b9b4ae"></div><div class="a" style="left:1px;top:181px;width:339px;height:38px;background:#308cc6"></div><div class="a" style="left:0;top:0;width:340px;height:453px;overflow:hidden"><svg class="a" style="left:6px;top:188.0px" width="10" height="6" viewBox="0 0 10 6"><path d="M0 0 H10 L5 5 Z" fill="#222"/></svg><svg class="a" style="left:24px;top:182.5px" width="16" height="16" viewBox="0 0 16 16"><path d="M8 0.5 L10 6 H15.5 L11 9.5 L12.8 15 L8 11.6 L3.2 15 L5 9.5 L0.5 6 H6 Z" fill="#c8d86a" stroke="#8a9a3a" stroke-width="0.6"/></svg><div class="t" style="left:46px;top:182.33px;font-size:15px;line-height:16.75px;color:#ffffff;transform:scaleX(0.9986);transform-origin:0 0;">Favoritos</div><svg class="a" style="left:26px;top:207.0px" width="10" height="6" viewBox="0 0 10 6"><path d="M0 0 H10 L5 5 Z" fill="#222"/></svg><svg class="a" style="left:44px;top:201.5px" width="16" height="16" viewBox="0 0 16 16"><path d="M1 3 H6 L7.5 4.5 H15 V14 H1 Z" fill="#dfe6ee" stroke="#e8eef5"/><rect x="1" y="6" width="14" height="8" fill="#c9d3de"/></svg><div class="t" style="left:66px;top:201.33px;font-size:15px;line-height:16.75px;color:#ffffff;">/mnt/bonn/ownCloud/geomaster/CM Braga</div><svg class="a" style="left:46px;top:226.0px" width="10" height="6" viewBox="0 0 10 6"><path d="M0 0 H10 L5 5 Z" fill="#3a3a3a"/></svg><svg class="a" style="left:64px;top:220.5px" width="16" height="16" viewBox="0 0 16 16"><path d="M1.5 3.5 H6 L7.5 5 H14.5 V14.5 H1.5 Z" fill="#f4f4f4" stroke="#777"/><line x1="1.5" y1="7" x2="14.5" y2="7" stroke="#777"/></svg><div class="t" style="left:86px;top:220.33px;font-size:15px;line-height:16.75px;color:#1e1e1e;transform:scaleX(0.9403);transform-origin:0 0;">3a sessao</div><svg class="a" style="left:66px;top:245.0px" width="10" height="6" viewBox="0 0 10 6"><path d="M0 0 H10 L5 5 Z" fill="#3a3a3a"/></svg><svg class="a" style="left:84px;top:239.5px" width="16" height="16" viewBox="0 0 16 16"><ellipse cx="8" cy="3.5" rx="5.5" ry="2" fill="#f4f4f4" stroke="#777"/><path d="M2.5 3.5 V12.5 A5.5 2 0 0 0 13.5 12.5 V3.5" fill="#f4f4f4" stroke="#777"/><path d="M2.5 7 A5.5 2 0 0 0 13.5 7 M2.5 10 A5.5 2 0 0 0 13.5 10" fill="none" stroke="#777"/></svg><div class="t" style="left:106px;top:239.33px;font-size:15px;line-height:16.75px;color:#1e1e1e;transform:scaleX(0.9744);transform-origin:0 0;">arcos.gpkg</div><svg class="a" style="left:104px;top:258.5px" width="16" height="16" viewBox="0 0 16 16"><path d="M2 4 L6 14 L10 4 L14 2" fill="none" stroke="#888" stroke-width="1"/><circle cx="14" cy="2" r="1.3" fill="#fff" stroke="#888" stroke-width="0.6"/></svg><div class="t" style="left:126px;top:258.32px;font-size:15px;line-height:16.75px;color:#1e1e1e;transform:scaleX(1.0165);transform-origin:0 0;">arruamentos</div><svg class="a" style="left:104px;top:277.5px" width="16" height="16" viewBox="0 0 16 16"><path d="M1.5 5 C3 2 6 3 8 4 C11 2 15 2 14.5 6 C14 9 15 12 12 12 C9 10 6 12 3 12 C1 11 1 7 1.5 5 Z" fill="#f6f6f6" stroke="#888"/></svg><div class="t" style="left:126px;top:277.32px;font-size:15px;line-height:16.75px;color:#1e1e1e;transform:scaleX(0.9907);transform-origin:0 0;">cadastro</div><svg class="a" style="left:104px;top:296.5px" width="16" height="16" viewBox="0 0 16 16"><path d="M1.5 5 C3 2 6 3 8 4 C11 2 15 2 14.5 6 C14 9 15 12 12 12 C9 10 6 12 3 12 C1 11 1 7 1.5 5 Z" fill="#f6f6f6" stroke="#888"/></svg><div class="t" style="left:126px;top:296.32px;font-size:15px;line-height:16.75px;color:#1e1e1e;transform:scaleX(1.0276);transform-origin:0 0;">edificado</div><svg class="a" style="left:104px;top:315.5px" width="16" height="16" viewBox="0 0 16 16"><path d="M1.5 5 C3 2 6 3 8 4 C11 2 15 2 14.5 6 C14 9 15 12 12 12 C9 10 6 12 3 12 C1 11 1 7 1.5 5 Z" fill="#f6f6f6" stroke="#888"/></svg><div class="t" style="left:126px;top:315.32px;font-size:15px;line-height:16.75px;color:#1e1e1e;transform:scaleX(0.9970);transform-origin:0 0;">freguesias</div><svg class="a" style="left:84px;top:334.5px" width="16" height="16" viewBox="0 0 16 16"><circle cx="7" cy="7" r="5.5" fill="none" stroke="#6aa33a" stroke-width="2.5"/><path d="M9 9 L15 15" stroke="#6aa33a" stroke-width="2.5"/><circle cx="9.5" cy="9.5" r="2.3" fill="#ee7913"/></svg><div class="t" style="left:106px;top:334.32px;font-size:15px;line-height:16.75px;color:#1e1e1e;transform:scaleX(0.9748);transform-origin:0 0;">edicaoavancada</div><svg class="a" style="left:84px;top:353.5px" width="16" height="16" viewBox="0 0 16 16"><path d="M1.5 5 C3 2 6 3 8 4 C11 2 15 2 14.5 6 C14 9 15 12 12 12 C9 10 6 12 3 12 C1 11 1 7 1.5 5 Z" fill="#e6eef8" stroke="#3a5a8a"/></svg><div class="t" style="left:106px;top:353.32px;font-size:15px;line-height:16.75px;color:#1e1e1e;transform:scaleX(1.0323);transform-origin:0 0;">limite.shp</div><svg class="a" style="left:84px;top:372.5px" width="16" height="16" viewBox="0 0 16 16"><rect x="1" y="1" width="14" height="14" fill="#1e2a3a"/><rect x="5" y="1" width="5" height="5" fill="#9ab"/><rect x="10" y="6" width="5" height="4" fill="#def"/><rect x="1" y="6" width="4" height="5" fill="#cde"/><rect x="6" y="11" width="4" height="4" fill="#abc"/></svg><div class="t" style="left:106px;top:372.32px;font-size:15px;line-height:16.75px;color:#1e1e1e;transform:scaleX(0.9490);transform-origin:0 0;">OP_LOT_JF_2005_01_ARCOS.tif</div><svg class="a" style="left:84px;top:391.5px" width="16" height="16" viewBox="0 0 16 16"><rect x="1" y="1" width="14" height="14" fill="#1e2a3a"/><rect x="5" y="1" width="5" height="5" fill="#9ab"/><rect x="10" y="6" width="5" height="4" fill="#def"/><rect x="1" y="6" width="4" height="5" fill="#cde"/><rect x="6" y="11" width="4" height="4" fill="#abc"/></svg><div class="t" style="left:106px;top:391.32px;font-size:15px;line-height:16.75px;color:#1e1e1e;">OP_LOT_JF_2005_01_ARCOS_alterado.tif</div><svg class="a" style="left:48.5px;top:413.5px" width="6" height="10" viewBox="0 0 6 10"><path d="M0 0 V10 L5 5 Z" fill="#3a3a3a"/></svg><svg class="a" style="left:64px;top:410.5px" width="16" height="16" viewBox="0 0 16 16"><path d="M1.5 3.5 H6 L7.5 5 H14.5 V14.5 H1.5 Z" fill="#f4f4f4" stroke="#777"/><line x1="1.5" y1="7" x2="14.5" y2="7" stroke="#777"/></svg><div class="t" style="left:86px;top:410.32px;font-size:15px;line-height:16.75px;color:#1e1e1e;transform:scaleX(0.9859);transform-origin:0 0;">Georreferenciação e novas camadas</div><svg class="a" style="left:48.5px;top:432.5px" width="6" height="10" viewBox="0 0 6 10"><path d="M0 0 V10 L5 5 Z" fill="#3a3a3a"/></svg><svg class="a" style="left:64px;top:429.5px" width="16" height="16" viewBox="0 0 16 16"><ellipse cx="8" cy="3.5" rx="5.5" ry="2" fill="#f4f4f4" stroke="#777"/><path d="M2.5 3.5 V12.5 A5.5 2 0 0 0 13.5 12.5 V3.5" fill="#f4f4f4" stroke="#777"/><path d="M2.5 7 A5.5 2 0 0 0 13.5 7 M2.5 10 A5.5 2 0 0 0 13.5 10" fill="none" stroke="#777"/></svg><div class="t" style="left:86px;top:429.32px;font-size:15px;line-height:16.75px;color:#1e1e1e;transform:scaleX(0.9968);transform-origin:0 0;">caop.gpkg</div><svg class="a" style="left:48.5px;top:451.5px" width="6" height="10" viewBox="0 0 6 10"><path d="M0 0 V10 L5 5 Z" fill="#3a3a3a"/></svg><svg class="a" style="left:64px;top:448.5px" width="16" height="16" viewBox="0 0 16 16"><path d="M1.5 5 C3 2 6 3 8 4 C11 2 15 2 14.5 6 C14 9 15 12 12 12 C9 10 6 12 3 12 C1 11 1 7 1.5 5 Z" fill="#e6eef8" stroke="#3a5a8a"/></svg><div class="t" style="left:86px;top:448.32px;font-size:15px;line-height:16.75px;color:#1e1e1e;">contornos.shp</div></div><div class="a" style="left:340px;top:181px;width:15px;height:286px;background:#e4e1dd;border-left:1px solid #d0cbc5"></div><div class="a" style="left:341px;top:195px;width:13px;height:103px;background:linear-gradient(90deg,#fdfdfc,#f0eeeb);border-top:1px solid #d0cbc5;border-bottom:1px solid #c9c4be"></div><div class="a" style="left:341px;top:181px;width:13px;height:14px;background:#f7f6f4"></div><div class="a" style="left:341px;top:440px;width:13px;height:13px;background:#f7f6f4;border-top:1px solid #d0cbc5"></div><svg class="a" style="left:343.0px;top:185.5px" width="9" height="5" viewBox="0 0 9 5"><path d="M0 5 H9 L4.5 0 Z" fill="#555"/></svg><svg class="a" style="left:343.0px;top:444.0px" width="9" height="5" viewBox="0 0 9 5"><path d="M0 0 H9 L4.5 5 Z" fill="#555"/></svg><div class="a" style="left:1px;top:453px;width:339px;height:14px;background:#e4e1dd;border-top:1px solid #c9c4be"></div><div class="a" style="left:15px;top:454px;width:217px;height:13px;background:linear-gradient(#fdfdfc,#efedea);border-right:1px solid #c9c4be;border-left:1px solid #d5d0ca"></div><div class="a" style="left:1px;top:454px;width:14px;height:13px;background:#f5f4f2"></div><div class="a" style="left:326px;top:454px;width:14px;height:13px;background:#f5f4f2;border-left:1px solid #d5d0ca"></div><svg class="a" style="left:5.5px;top:456.0px" width="5" height="9" viewBox="0 0 5 9"><path d="M5 0 V9 L0 4.5 Z" fill="#555"/></svg><svg class="a" style="left:330.5px;top:456.0px" width="5" height="9" viewBox="0 0 5 9"><path d="M0 0 V9 L5 4.5 Z" fill="#555"/></svg><div class="a" style="left:340px;top:453px;width:14px;height:14px;background:#efedea;border-top:1px solid #c9c4be"></div><svg class="a" style="left:170px;top:469.5px" width="18" height="2" fill="#aaa"><rect x="0" y="0" width="1" height="1"/><rect x="3" y="0" width="1" height="1"/><rect x="6" y="0" width="1" height="1"/><rect x="9" y="0" width="1" height="1"/><rect x="12" y="0" width="1" height="1"/><rect x="15" y="0" width="1" height="1"/></svg><svg class="a" style="left:170px;top:630.5px" width="18" height="2" fill="#aaa"><rect x="0" y="0" width="1" height="1"/><rect x="3" y="0" width="1" height="1"/><rect x="6" y="0" width="1" height="1"/><rect x="9" y="0" width="1" height="1"/><rect x="12" y="0" width="1" height="1"/><rect x="15" y="0" width="1" height="1"/></svg><div class="t" style="left:4px;top:476.32px;font-size:15px;line-height:16.75px;color:#1e1e1e;transform:scaleX(0.9758);transform-origin:0 0;">Marcadores Espaciais</div><div class="a" style="left:328px;top:478px;width:11px;height:11px;border:1px solid #7a7570;border-radius:2px"></div><svg class="a" style="left:329px;top:479px" width="10" height="10" viewBox="0 0 10 10"><rect x="4" y="1.5" width="4.5" height="4.5" fill="none" stroke="#666" stroke-width="1.2"/><rect x="1.5" y="4" width="4.5" height="4.5" fill="#efebe7" stroke="#666" stroke-width="1.2"/></svg><div class="a" style="left:342px;top:478px;width:11px;height:11px;border:1px solid #7a7570;border-radius:2px"></div><svg class="a" style="left:343px;top:479px" width="10" height="10" viewBox="0 0 10 10"><path d="M2 2 L8 8 M8 2 L2 8" stroke="#555" stroke-width="2"/></svg><svg class="a" style="left:8px;top:500px" width="16" height="16" viewBox="0 0 16 16"><circle cx="10" cy="6" r="5" fill="#eee" stroke="#666" stroke-width="1.2"/><path d="M10 1.5 V7" stroke="#4a7ab8" stroke-width="2.5"/><path d="M2 15 L6.5 10.5" stroke="#e0b020" stroke-width="2.5"/></svg><svg class="a" style="left:33px;top:500px" width="16" height="16" viewBox="0 0 16 16"><rect x="2" y="1" width="10" height="14" fill="#e6e6e6" stroke="#aaa"/><rect x="6" y="0" width="3" height="6" fill="#4a7ab8"/><rect x="9" y="9" width="7" height="7" fill="#d4a90f"/></svg><svg class="a" style="left:58px;top:500px" width="16" height="16" viewBox="0 0 16 16"><rect x="2" y="2" width="12" height="2" fill="#d22"/><rect x="6" y="0.5" width="4" height="2" fill="#d22"/><path d="M3 5 H13 L12 15 H4 Z" fill="none" stroke="#d22" stroke-width="1.5"/><path d="M6.5 7 V13 M9.5 7 V13" stroke="#d22" stroke-width="1.3"/></svg><svg class="a" style="left:83px;top:500px" width="16" height="16" viewBox="0 0 16 16"><circle cx="4" cy="8" r="3" fill="#5b8ac5"/><circle cx="12" cy="3" r="2.5" fill="#5b8ac5"/><circle cx="12" cy="13" r="2.5" fill="#5b8ac5"/><path d="M4 8 L12 3 M4 8 L12 13" stroke="#5b8ac5" stroke-width="1.5"/><path d="M11 14 H16 L13.5 16 Z" fill="#333"/></svg><div class="a" style="left:0;top:524px;width:355px;height:106px;background:#fff;border:1px solid #b9b4ae"></div><div class="a" style="left:1px;top:525px;width:353px;height:21px;background:linear-gradient(#fbfbfa,#efedea);border-bottom:1px solid #d3cec8"></div><div class="a" style="left:100px;top:526px;width:1px;height:19px;background:#d3cec8"></div><div class="a" style="left:200px;top:526px;width:1px;height:19px;background:#d3cec8"></div><div class="a" style="left:300px;top:526px;width:1px;height:19px;background:#d3cec8"></div><div class="t" style="left:4px;top:527.82px;font-size:15px;line-height:16.75px;color:#1e1e1e;transform:scaleX(0.9997);transform-origin:0 0;">Nome</div><svg class="a" style="left:87px;top:533px" width="9" height="5" viewBox="0 0 9 5"><path d="M0 0 H9 L4.5 5 Z" fill="#444"/></svg><div class="t" style="left:104px;top:527.82px;font-size:15px;line-height:16.75px;color:#1e1e1e;transform:scaleX(1.0310);transform-origin:0 0;">Projeto</div><div class="t" style="left:204px;top:527.82px;font-size:15px;line-height:16.75px;color:#1e1e1e;transform:scaleX(1.0152);transform-origin:0 0;">xMín</div><div class="t" style="left:304px;top:527.82px;font-size:15px;line-height:16.75px;color:#1e1e1e;transform:scaleX(1.0152);transform-origin:0 0;">yMín</div><div class="a" style="left:1px;top:546px;width:353px;height:17px;background:#308cc6"></div><div class="t" style="left:4px;top:546.82px;font-size:15px;line-height:16.75px;color:#ffffff;transform:scaleX(1.0634);transform-origin:0 0;">loteament…</div><div class="t" style="left:104px;top:546.82px;font-size:15px;line-height:16.75px;color:#ffffff;transform:scaleX(0.9811);transform-origin:0 0;">edicaoavan…</div><div class="t" style="left:204px;top:546.82px;font-size:15px;line-height:16.75px;color:#ffffff;transform:scaleX(0.9901);transform-origin:0 0;">-23790,248…</div><div class="t" style="left:304px;top:546.82px;font-size:15px;line-height:16.75px;color:#ffffff;transform:scaleX(0.9989);transform-origin:0 0;">205479</div><div class="a" style="left:1px;top:615px;width:353px;height:14px;background:#e4e1dd;border-top:1px solid #c9c4be"></div><div class="a" style="left:15px;top:616px;width:143px;height:13px;background:linear-gradient(#fdfdfc,#efedea);border-right:1px solid #c9c4be;border-left:1px solid #d5d0ca"></div><div class="a" style="left:1px;top:616px;width:14px;height:13px;background:#f5f4f2"></div><div class="a" style="left:340px;top:616px;width:14px;height:13px;background:#f5f4f2;border-left:1px solid #d5d0ca"></div><svg class="a" style="left:5.5px;top:618.0px" width="5" height="9" viewBox="0 0 5 9"><path d="M5 0 V9 L0 4.5 Z" fill="#555"/></svg><svg class="a" style="left:344.5px;top:618.0px" width="5" height="9" viewBox="0 0 5 9"><path d="M0 0 V9 L5 4.5 Z" fill="#555"/></svg><div class="t" style="left:4px;top:637.82px;font-size:15px;line-height:16.75px;color:#1e1e1e;transform:scaleX(0.9190);transform-origin:0 0;">Camadas</div><div class="a" style="left:328px;top:640px;width:11px;height:11px;border:1px solid #7a7570;border-radius:2px"></div><svg class="a" style="left:329px;top:641px" width="10" height="10" viewBox="0 0 10 10"><rect x="4" y="1.5" width="4.5" height="4.5" fill="none" stroke="#666" stroke-width="1.2"/><rect x="1.5" y="4" width="4.5" height="4.5" fill="#efebe7" stroke="#666" stroke-width="1.2"/></svg><div class="a" style="left:342px;top:640px;width:11px;height:11px;border:1px solid #7a7570;border-radius:2px"></div><svg class="a" style="left:343px;top:641px" width="10" height="10" viewBox="0 0 10 10"><path d="M2 2 L8 8 M8 2 L2 8" stroke="#555" stroke-width="2"/></svg><svg class="a" style="left:8px;top:662px" width="16" height="16" viewBox="0 0 16 16"><path d="M2 14 L6 8 L9 11 Z" fill="#e86a3a"/><path d="M6 8 L14 1 L16 3 L9 11 Z" fill="#f4d84a" stroke="#b28e12" stroke-width="0.6"/><rect x="1" y="9" width="6" height="3" fill="#3a6ab8" transform="rotate(-40 4 10)"/></svg><svg class="a" style="left:33px;top:662px" width="16" height="16" viewBox="0 0 16 16"><rect x="1" y="3" width="9" height="11" fill="#fff" stroke="#777"/><rect x="4" y="0.5" width="9" height="11" fill="#fff" stroke="#777"/><circle cx="13" cy="13" r="3" fill="#5aa55a"/></svg><svg class="a" style="left:58px;top:662px" width="16" height="16" viewBox="0 0 16 16"><path d="M1 8 C4 3 12 3 15 8 C12 13 4 13 1 8 Z" fill="#eee" stroke="#777"/><circle cx="8" cy="8" r="3" fill="#4a7ab8"/><path d="M11 14 H16 L13.5 16 Z" fill="#333"/></svg><svg class="a" style="left:82.5px;top:662px" width="16" height="16" viewBox="0 0 16 16"><path d="M1 1.5 H15 L9.5 8 V14.5 L6.5 13 V8 Z" fill="#6d9ed6" stroke="#4a78b0" stroke-width="0.8"/><rect x="1.5" y="1.2" width="13" height="1.6" fill="#f4e04a"/></svg><svg class="a" style="left:109px;top:662px" width="16" height="16" viewBox="0 0 16 16"><text x="2" y="12" font-size="13" fill="#aaa" font-family="Liberation Serif">ε</text><rect x="9" y="10" width="6" height="5" fill="none" stroke="#bbb"/></svg><svg class="a" style="left:128px;top:667px" width="10" height="6" viewBox="0 0 10 6"><path d="M0 0 H10 L5 5.5 Z" fill="#ccc"/></svg><svg class="a" style="left:145px;top:662px" width="16" height="16" viewBox="0 0 16 16"><rect x="1" y="3" width="8" height="11" fill="#fff" stroke="#888"/><rect x="3" y="6" width="3" height="3" fill="#f4a030"/><path d="M12 1 V12 M9 9 L12 14 L15 9" stroke="#4a7ab8" stroke-width="2" fill="none"/></svg><svg class="a" style="left:170px;top:662px" width="16" height="16" viewBox="0 0 16 16"><rect x="1" y="3" width="8" height="11" fill="#fff" stroke="#888"/><rect x="3" y="9" width="3" height="3" fill="#f4a030"/><path d="M12 15 V4 M9 6 L12 1 L15 6" stroke="#4a7ab8" stroke-width="2" fill="none"/></svg><svg class="a" style="left:194px;top:662px" width="16" height="16" viewBox="0 0 16 16"><rect x="1" y="1" width="12" height="12" fill="#fff" stroke="#777"/><rect x="9" y="10" width="7" height="5" rx="1" fill="#e03030"/><rect x="10.5" y="12" width="4" height="1" fill="#fff"/></svg><div class="a" style="left:0;top:686px;width:355px;height:222px;background:#fff;border:1px solid #b9b4ae"></div><svg class="a" style="left:6px;top:694.5px" width="10" height="6" viewBox="0 0 10 6"><path d="M0 0 H10 L5 5 Z" fill="#3a3a3a"/></svg><div class="a" style="left:24px;top:690px;width:13px;height:13px;background:#fff;border:1px solid #9a958f;border-radius:1px"></div><svg class="a" style="left:25px;top:691px" width="11" height="11" viewBox="0 0 11 11"><path d="M2 6 L4.5 10 L10 1.5" fill="none" stroke="#111" stroke-width="1.8"/></svg><svg class="a" style="left:43px;top:689px" width="16" height="16" viewBox="0 0 16 16"><rect x="1" y="4" width="9" height="11" fill="#fff" stroke="#777"/><rect x="4" y="1" width="9" height="11" fill="#fff" stroke="#777"/><path d="M6 4 V10 M9 4 V10" stroke="#777"/></svg><div class="t" style="left:66px;top:688.82px;font-size:15px;line-height:16.75px;color:#1e1e1e;transform:scaleX(1.0087);transform-origin:0 0;">arcos</div><div class="a" style="left:44px;top:709px;width:13px;height:13px;background:#fff;border:1px solid #9a958f;border-radius:1px"></div><svg class="a" style="left:45px;top:710px" width="11" height="11" viewBox="0 0 11 11"><path d="M2 6 L4.5 10 L10 1.5" fill="none" stroke="#111" stroke-width="1.8"/></svg><div class="a" style="left:64px;top:714.5px;width:16px;height:3px;background:#707070"></div><div class="t" style="left:86px;top:707.82px;font-size:15px;line-height:16.75px;font-weight:bold;color:#111;transform:scaleX(0.9759);transform-origin:0 0;">arcos arruamentos</div><div class="a" style="left:44px;top:728px;width:13px;height:13px;background:#fff;border:1px solid #9a958f;border-radius:1px"></div><svg class="a" style="left:45px;top:729px" width="11" height="11" viewBox="0 0 11 11"><path d="M2 6 L4.5 10 L10 1.5" fill="none" stroke="#111" stroke-width="1.8"/></svg><div class="a" style="left:64px;top:727px;width:16px;height:16px;background:#8c6f22"></div><div class="t" style="left:86px;top:726.82px;font-size:15px;line-height:16.75px;font-weight:bold;color:#111;transform:scaleX(0.9724);transform-origin:0 0;">arcos edificado</div><div class="a" style="left:86px;top:742px;width:107px;height:1px;background:#111"></div><div class="a" style="left:44px;top:747px;width:13px;height:13px;background:#fff;border:1px solid #9a958f;border-radius:1px"></div><svg class="a" style="left:45px;top:748px" width="11" height="11" viewBox="0 0 11 11"><path d="M2 6 L4.5 10 L10 1.5" fill="none" stroke="#111" stroke-width="1.8"/></svg><svg class="a" style="left:64px;top:746px" width="16" height="16" viewBox="0 0 16 16"><rect x="0.5" y="0.5" width="15" height="15" fill="#fff" stroke="#222" stroke-dasharray="2 3"/><circle cx="5" cy="8" r="0.9" fill="#111"/><circle cx="11" cy="8" r="0.9" fill="#111"/></svg><div class="t" style="left:86px;top:745.82px;font-size:15px;line-height:16.75px;font-weight:bold;color:#111;transform:scaleX(0.9651);transform-origin:0 0;">arcos cadastro</div><div class="a" style="left:44px;top:766px;width:13px;height:13px;background:#fff;border:1px solid #9a958f;border-radius:1px"></div><svg class="a" style="left:45px;top:767px" width="11" height="11" viewBox="0 0 11 11"><path d="M2 6 L4.5 10 L10 1.5" fill="none" stroke="#111" stroke-width="1.8"/></svg><svg class="a" style="left:64px;top:765px" width="16" height="16" viewBox="0 0 16 16"><rect x="1" y="1" width="14" height="14" fill="#c3c3c3" stroke="#333" stroke-width="1.4" stroke-dasharray="3 2"/></svg><div class="t" style="left:86px;top:764.82px;font-size:15px;line-height:16.75px;font-weight:bold;color:#111;transform:scaleX(0.9704);transform-origin:0 0;">arcos freguesias</div><div class="a" style="left:4px;top:911px;width:361px;height:25px;background:#fff;border:1px solid #aaa49d;border-radius:4px"></div><svg class="a" style="left:11px;top:916px" width="16" height="16" viewBox="0 0 16 16"><circle cx="6" cy="6" r="4.5" fill="none" stroke="#888" stroke-width="1.5"/><path d="M9.5 9.5 L14 14" stroke="#888" stroke-width="1.8"/></svg><div class="t" style="left:33px;top:916.32px;font-size:15px;line-height:16.75px;color:#8a8a8a;transform:scaleX(0.9862);transform-origin:0 0;">Escreva para localizar (Ctrl+K)</div><div class="t" style="left:677px;top:916.87px;font-size:14px;line-height:15.64px;color:#1e1e1e;transform:scaleX(0.8564);transform-origin:0 0;">Coordenada</div><div class="a" style="left:747px;top:912px;width:109px;height:23px;background:#fff;border:1px solid #aaa49d;border-radius:3px"></div><div class="t" style="left:752px;top:916.87px;font-size:14px;line-height:15.64px;color:#1e1e1e;transform:scaleX(0.8422);transform-origin:0 0;">-24104.5,205615.1</div><svg class="a" style="left:861px;top:915px" width="16" height="16" viewBox="0 0 16 16"><path d="M3 2 C6 0 10 1 12 5 C13 9 11 14 7 14 C3 13 1 9 3 2 Z" fill="#fff" stroke="#333" stroke-width="1.2"/><path d="M5 3 L8 8" stroke="#333"/><path d="M12 2 L15 0" stroke="#555"/></svg><div class="t" style="left:890px;top:916.87px;font-size:14px;line-height:15.64px;color:#1e1e1e;transform:scaleX(0.7853);transform-origin:0 0;">Escala</div><div class="a" style="left:927px;top:912px;width:96px;height:23px;background:#fff;border:1px solid #aaa49d;border-radius:3px"></div><div class="a" style="left:1003px;top:913px;width:1px;height:21px;background:#d3cec8"></div><div class="t" style="left:931px;top:916.87px;font-size:14px;line-height:15.64px;color:#1e1e1e;transform:scaleX(0.9108);transform-origin:0 0;">1:2907</div><svg class="a" style="left:1008px;top:921px" width="10" height="6" viewBox="0 0 10 6"><path d="M0 0 H10 L5 5.5 Z" fill="#444"/></svg><svg class="a" style="left:1034px;top:915px" width="16" height="16" viewBox="0 0 16 16"><path d="M4 7 V5 A4 4 0 0 1 12 5 V7" fill="none" stroke="#666" stroke-width="2"/><rect x="2.5" y="7" width="11" height="8" rx="1" fill="#666"/></svg><div class="t" style="left:1057px;top:916.87px;font-size:14px;line-height:15.64px;color:#1e1e1e;transform:scaleX(0.8607);transform-origin:0 0;">Magnificação</div><div class="a" style="left:1132px;top:912px;width:98px;height:24px;background:#fff;border:1px solid #aaa49d;border-radius:3px"></div><div class="a" style="left:1215px;top:913px;width:1px;height:22px;background:#d3cec8"></div><div class="t" style="left:1137px;top:916.87px;font-size:14px;line-height:15.64px;color:#1e1e1e;transform:scaleX(0.8378);transform-origin:0 0;">100%</div><svg class="a" style="left:1217.5px;top:916.5px" width="9" height="5" viewBox="0 0 9 5"><path d="M0 5 H9 L4.5 0 Z" fill="#444"/></svg><svg class="a" style="left:1217.5px;top:926.5px" width="9" height="5" viewBox="0 0 9 5"><path d="M0 0 H9 L4.5 5 Z" fill="#444"/></svg><div class="t" style="left:1239px;top:916.87px;font-size:14px;line-height:15.64px;color:#1e1e1e;transform:scaleX(0.8438);transform-origin:0 0;">Rotação</div><div class="a" style="left:1293px;top:912px;width:95px;height:24px;background:#fff;border:1px solid #aaa49d;border-radius:3px"></div><div class="a" style="left:1372px;top:913px;width:1px;height:22px;background:#d3cec8"></div><div class="t" style="left:1298px;top:916.87px;font-size:14px;line-height:15.64px;color:#1e1e1e;transform:scaleX(1.0017);transform-origin:0 0;">0,0 °</div><svg class="a" style="left:1375.5px;top:916.5px" width="9" height="5" viewBox="0 0 9 5"><path d="M0 5 H9 L4.5 0 Z" fill="#444"/></svg><svg class="a" style="left:1375.5px;top:926.5px" width="9" height="5" viewBox="0 0 9 5"><path d="M0 0 H9 L4.5 5 Z" fill="#444"/></svg><div class="a" style="left:1393px;top:916px;width:13px;height:13px;background:#fff;border:1px solid #9a958f;border-radius:1px"></div><svg class="a" style="left:1394px;top:917px" width="11" height="11" viewBox="0 0 11 11"><path d="M2 6 L4.5 10 L10 1.5" fill="none" stroke="#111" stroke-width="1.8"/></svg><div class="t" style="left:1412px;top:916.37px;font-size:14px;line-height:15.64px;color:#1e1e1e;transform:scaleX(0.8616);transform-origin:0 0;">Renderizar</div><svg class="a" style="left:1488px;top:916px" width="16" height="16" viewBox="0 0 16 16"><circle cx="8" cy="8" r="6.5" fill="none" stroke="#777" stroke-width="1.2"/><path d="M1.5 8 H14.5 M8 1.5 V14.5 M3 4.5 H13 M3 11.5 H13" stroke="#777" stroke-width="0.9"/><ellipse cx="8" cy="8" rx="3" ry="6.5" fill="none" stroke="#777"/></svg><div class="t" style="left:1508px;top:916.87px;font-size:14px;line-height:15.64px;color:#1e1e1e;transform:scaleX(0.7912);transform-origin:0 0;">EPSG:3763</div><svg class="a" style="left:1587px;top:916px" width="16" height="16" viewBox="0 0 16 16"><path d="M8 2 C12 2 15 4.5 15 7.5 C15 10.5 12 13 8 13 L4 15 L5 12 C2.5 11 1 9.5 1 7.5 C1 4.5 4 2 8 2 Z" fill="#555"/><circle cx="5" cy="7.5" r="1" fill="#fff"/><circle cx="8" cy="7.5" r="1" fill="#fff"/><circle cx="11" cy="7.5" r="1" fill="#fff"/></svg><svg class="a" style="left:1619px;top:926px" width="12" height="12" fill="#c5c0ba"><rect x="9" y="0" width="1" height="1"/><rect x="9" y="3" width="1" height="1"/><rect x="6" y="3" width="1" height="1"/><rect x="9" y="6" width="1" height="1"/><rect x="6" y="6" width="1" height="1"/><rect x="3" y="6" width="1" height="1"/><rect x="9" y="9" width="1" height="1"/><rect x="6" y="9" width="1" height="1"/><rect x="3" y="9" width="1" height="1"/><rect x="0" y="9" width="1" height="1"/></svg><svg class="a" style="left:361px;top:130px" width="1272" height="778" viewBox="361 130 1272 778">
<defs><pattern id="dots" x="0" y="0" width="9" height="18" patternUnits="userSpaceOnUse"><circle cx="6.4" cy="14.4" r="1.55" fill="#000"/><circle cx="1.9" cy="5.4" r="1.55" fill="#000"/></pattern></defs>
<rect x="361" y="130" width="1272" height="778" fill="#c3c3c3"/>
<polyline points="868,127 899,381 929,640 952,842" fill="none" stroke="#222" stroke-width="3.8"/>
<polyline points="390,910 396,907 467,893 520,884 538,884 597,888 656,891 715,897 780,906 785,881 791.5,858 952,842 1209,811 1633,760 1640,759" fill="none" stroke="#222" stroke-width="4.2" stroke-dasharray="9.4 2"/>
<polygon points="892,459 973.9,490.7 1019.6,508 1050,516.3 1075,521.9 1099.9,533.6 1075,539.9 1065.3,545.4 1054.2,555.1 1041.7,568.9 1018.2,610.5 1008.5,600.8 1001.6,589.7 990.5,578.6 979.4,571.7 968.3,571 960,573.1 910,579 827,593 794.5,512.4 807,499.7 825,487 852.4,472.6 874,463.5" fill="url(#dots)" stroke="#000" stroke-width="1.6"/>
<polyline points="936,476 910,579" fill="none" stroke="#000" stroke-width="1.6"/>
<g fill="#8c6f22">
<polygon points="394,156 412,157 411,172 393,171"/>
<polygon points="398,129 417,129 404.7,138.7"/>
<polygon points="420.5,129 431.5,129 424.3,135.7"/>
<polygon points="440.5,129 448,133 442.7,146 435.8,143.3"/>
<polygon points="394,146 402,139 404,142 396,149"/>
<polygon points="528,148 534,144 540,149 534,153"/>
<polygon points="557,196 578,199 577,223 556,221"/>
<polygon points="523,225 550,230 553,221 571,223 568,247 522,238"/>
<polygon points="511,235 522,238 518,260 548,269 546,280 506,266"/>
<polygon points="591,203.9 603.8,206.1 604.5,208.3 609.7,209.8 609,219.5 608.2,226.2 615,228.5 611.2,233.7 606,231.4 588.1,227"/>
<polygon points="578.4,239.6 597.8,243.4 601.5,240.4 603,233.7 606.8,234.4 605.3,239.6 601.5,244.1 597.8,250 577.7,245.6"/>
<polygon points="548.6,280.7 568.7,257.5 577.7,261.3 589.6,251.3 592.9,253.8 562,291.5 555.3,290 558.3,286.2"/>
<polygon points="562,290.3 571.7,278.4 578.4,282.9 582.1,268.7 595.6,271.7 594,291.1 585.9,293.3 566.5,294.8"/>
<polygon points="559.1,298.8 569.4,300.3 566,323.8 578.7,326.8 582.2,311.1 589,312 580.2,354.7 576.8,374.8 567,372.8 569.9,353.7 557.2,351.3 558.1,336.6 552.3,335.1"/>
<polygon points="629,316 649,320 646,354 627,351"/>
<polygon points="653,208.7 659.4,208 660,203.8 672,204.5 673,227.4 677.4,230 681.5,248 672,249 670.5,242.6 665,242.6 665,233.6 655,233.6"/>
<polygon points="654,244 671,246.8 669,258.5 651.8,255"/>
<polygon points="651,264 669.8,268 665,290.4 646,286"/>
<polygon points="677.4,266.8 687,265.5 694,291.8 671.8,298 669,292.5 681.5,288.3"/>
<polygon points="653.8,300.8 667.7,297.3 669.8,305 656.6,309"/>
<polygon points="669.8,302.8 689,298 688.5,309 672.5,314"/>
<polygon points="692,185 702,185 702,196 714,197 714,210 703,210 703,221 692,221"/>
<polygon points="701,183 708,166 711,168 704,185"/>
<polygon points="696.4,271.4 761.9,257.8 765,269 699.6,284.2"/>
<polygon points="765.9,245 778.7,242.7 784.2,266.6 772.3,269"/>
<polygon points="718.7,302 734,293.4 780,358.6 768.6,370"/>
<polygon points="701.5,361.5 716.8,352 721.6,360.5 707,369"/>
<polygon points="775,288 779,286 782,294 778,296"/>
<polygon points="718.7,388.3 734,379.7 754.2,413 759,431.4 745.6,443 739,422.8"/>
<polygon points="497,387 527,389 527,390 497,390"/>
<polygon points="613.2,366 629.8,371.5 627.7,377.5 620.9,376.6 618.7,389 610.2,387.3"/>
<polygon points="643.9,370.7 655,376.2 652,383.9 656.6,386.4 651.5,395.4 646.4,393.2 642.2,397.9 637.5,397 634.9,387.3 639.2,379.2"/>
<polygon points="629.4,396.2 637.5,397.9 634.9,409 630.2,409.4 628.1,412.8 625.1,411.6"/>
<polygon points="658.3,373.2 663,376.6 660.5,382.6 655.4,380"/>
<polygon points="663.9,379.6 669.8,382.2 667.7,386.8 661.8,384.3"/>
<polygon points="676.2,380.9 684.8,389.8 681.3,393.2 672,385.6"/>
<polygon points="812.6,300.1 817.4,294.4 830.8,305.9 821.2,321.2 808.8,314.5 818.3,305.9"/>
<polygon points="785,334 797,324 806,333 794,343"/>
<polygon points="838,384 851,371 863,379 848,392"/>
<polygon points="876.7,396 894.6,378.3 905.7,388.6 887,407.3"/>
<polygon points="897,423.5 930,422 930,434.6 920,435 921,451 909,451 909,435 897,435"/>
<polygon points="795,437 807,423.5 814.5,433 801.7,445.6"/>
<polygon points="836.7,456 858,447.3 860.5,459.3 840,467"/>
<polygon points="760,340 770,340 780,358 776,370 766,366 760,352"/>
<polygon points="764,448 766,446 777,454 775,457"/>
<polygon points="498,386 549,392 537,481 486,474"/>
<polygon points="480,512 530,518 519,606 466,599"/>
<polygon points="637,429 646,419 656,428 647,438"/>
<polygon points="697.7,438 710,442 706,455.4 694,452.5"/>
<polygon points="722,444 727,433 729,441"/>
<polygon points="611,451 631,454 629,472 609,469"/>
<polygon points="604,485 628,488 629,482 636,484 636,502 603,501"/>
<polygon points="657,459 686,470 683,479 671,475 664,494 645,487"/>
<polygon points="743,483 760,464 767,471 756,483 763,490 756,497"/>
<polygon points="731,501 740,492 749,501 740,510"/>
<polygon points="698.4,539.8 723.3,506 736.7,517.5 731,523.9 732.9,526.4 711.8,551.3"/>
<polygon points="671,520 687,523 688,541 670,538"/>
<polygon points="640,524 661,529 657,547 637,542"/>
<polygon points="604,536 621,539 618,553 602,550"/>
<polygon points="621,546 630,547 634,582 623,582 622,560 617,558"/>
<polygon points="617,581 632,583 631,606 616,604"/>
<polygon points="644,590 659,592 657,610 642,608"/>
<polygon points="665,575 684,576 683,609 663,607"/>
<polygon points="715.6,556.4 725.2,545.6 732.9,552.6 719.5,558.4 718.2,573 709.9,574.3 708.6,562.8"/>
<polygon points="734,554.5 752.7,562.2 750.1,575 728.4,569.2"/>
<polygon points="747,522 763,524 761,543 744,541"/>
<polygon points="750,551 761,549 761,558 749,560"/>
<polygon points="775,543 797,538 800,560 790,568 776,562"/>
<polygon points="883,538 903,542 901,552 881,548"/>
<polygon points="827,551 846,555 844,565 825,561"/>
<polygon points="876,568 894,572 892,582 874,578"/>
<polygon points="819,602 836,604 834,631 817,629"/>
<polygon points="883,608 905,611 903,628 881,625"/>
<polygon points="910,614 932,617 930,633 908,630"/>
<polygon points="804,628 809,628 809,633 804,633"/>
<polygon points="577,770 597,772 596,787 576,785"/>
<polygon points="574,797 588,797 588,813 573,813"/>
<polygon points="569,820 580,823 591,830 591,844 568,843"/>
<polygon points="563,862 576,864 575,876 562,874"/>
<polygon points="678,807 699,810 697,825 677,823"/>
<polygon points="673,831 691,834 689,846 672,843"/>
<polygon points="657,838 668,836 669,853 657,854"/>
<polygon points="664,855 680,857 679,869 663,867"/>
<polygon points="644,868 656,869 655,879 643,878"/>
<polygon points="659,876 678,879 677,891 658,889"/>
<polygon points="711,797 725,800 712,875 700,872"/>
<polygon points="517,653 534,649 556,658 556,674 536,670 522,660 516,657"/>
<polygon points="525,673 531,673 531,680 525,680"/>
<polygon points="522,681 534,683 532,702 520,700"/>
<polygon points="543,697 551,697 551,704 543,704"/>
<polygon points="535,711 547,712 548,742 534,741"/>
<polygon points="544,639 548,639 548,645 544,645"/>
<polygon points="573,700 580,693 593,717 586,721"/>
<polygon points="514,779 521,773 526,780 519,786"/>
<polygon points="457,747.8 469.7,745.5 469.7,766.3 476.6,776.7 467.4,784.8 454.6,768.6"/>
<polygon points="474.3,740.9 497.4,739.7 497.4,749 487,751.3 487,779 475.5,777.9"/>
<polygon points="460.4,825.3 483.5,831 480,856.5 457,851.8"/>
<polygon points="499.7,847.2 516,849.5 513.6,866.9 498.6,864.6"/>
<polygon points="516,772 521,770 521,785 516,785"/>
<polygon points="493.6,874.4 509.2,877.5 505.8,891.8 499.7,897.7 485.9,895.5 487.2,887"/>
<polygon points="466.6,885.1 480.7,887.6 479.8,891.8 465.7,889"/>
<polygon points="468.8,891.2 487.2,895.5 485.6,901 492,902.9 490.8,908 464.5,908 466.3,899.2"/>
<polygon points="418.8,884.2 425.7,887.7 417.6,907 410.7,907"/>
<polygon points="428,701.6 439.6,703.9 433.8,727 417.6,723.5 420,709.7 427,710.8"/>
<polygon points="415.3,724.7 433.8,728 431.5,746.6 410.7,742"/>
<polygon points="385.3,720 392.2,719 399,732.8 390,738.6 383,730.5"/>
<polygon points="362,724.7 370.2,724.7 370.2,738.6 362,738.6"/>
<polygon points="399,747.8 415.3,751.3 413,766.3 396.8,764"/>
<polygon points="429,750 437.3,751 436.3,757 428,756"/>
<polygon points="398,774.4 417.6,776.7 416.5,803.3 402.6,802 401.5,787 396.8,786"/>
<polygon points="423.4,760.5 439.6,767.5 428,793 420,789.4"/>
<polygon points="381.8,791.7 386.4,788.3 398,801 393.4,804.5"/>
<polygon points="373.7,797.5 378.3,796.4 383,810.2 379.5,811.4"/>
<polygon points="370.2,828.7 384,821.8 388.7,812.5 405,828.7 393.4,840.3 377.2,838"/>
<polygon points="370,853 383,854 381.8,864.6 369,863.4"/>
<polygon points="386.4,858.8 396.8,860 395.7,884.2 385.3,883"/>
<polygon points="362,875 372.6,876 372.6,880.8 362,880"/>
<polygon points="363.3,888.8 374.9,891 372.6,899.2 362,895.8"/>
<polygon points="380.7,891 396.8,892 396.8,907 380.7,907"/>
<polygon points="821,602 836,604 837,629 819,628"/>
<polygon points="808,634 829,637 827,654 807,652"/>
<polygon points="801,660 823,663 820,680 799,677"/>
<polygon points="801,685 818,687 816,701 799,699"/>
<polygon points="789,710 810,713 808,731 787,728"/>
<polygon points="785,731 806,734 804,752 785,750"/>
<polygon points="885,659 898,661 896,677 883,675"/>
<polygon points="840,674 859,677 857,695 838,692"/>
<polygon points="833,706 854,709 852,726 831,723"/>
<polygon points="878,706 896,709 894,719 876,716"/>
<polygon points="872,727 891,730 889,742 870,739"/>
<polygon points="680,598 692,598 691.6,619.2 680,619"/>
<polygon points="704,592 724,597 716,613.8 703.3,609.6"/>
<polygon points="664,611.7 673.5,612.8 672.4,622.4 662.8,621.3"/>
<polygon points="698,611.7 706.5,613.8 706.5,634 697,635 689.5,632 690.5,621.3 697,621.3"/>
<polygon points="727.8,625.6 739.5,619.2 747,644.7 736.3,646.9"/>
<polygon points="758.7,616 774.7,610.6 784.2,639.4 768.3,643.7"/>
<polygon points="635,641.5 653.2,640.5 652.2,656.4 632,655.4"/>
<polygon points="664,660.7 674.5,654.3 681,666 669.2,673.5"/>
<polygon points="684,670.3 689.5,665 704.4,661.8 707.6,671.4 694.8,674.5 693.7,679.9 686.3,682"/>
<polygon points="710.8,648 720.3,643.7 725.7,655.4 733,656.4 736.3,660.7 721.4,666"/>
<polygon points="727.8,670.3 738.4,670.3 747,674.5 744.8,689.5 730,691.6 726.7,678.8"/>
<polygon points="612.8,686.3 637.3,672.4 643.7,683 618,695.8"/>
<polygon points="667,684 678.8,676.7 684,688.4 673.5,694.8"/>
<polygon points="764,677.7 786.4,685.2 783.2,695.8 761.9,691.6"/>
<polygon points="644.7,709.7 656.4,702.2 666,715 653.2,722.5"/>
<polygon points="673.5,706 679,704.4 681,710 675.5,711.8"/>
<polygon points="667,718.2 689.5,714 693.7,725.7 670.3,731"/>
<polygon points="702.2,706.5 716,703.3 721.4,719.3 706.5,723.5"/>
<polygon points="756.5,703.3 779,708.6 775.7,722.5 754.4,718.2"/>
<polygon points="600,727.8 614.9,722.5 624.5,727.8 623.4,734.2 605.3,742.7 600,738.4"/>
<polygon points="627.7,733 637,732 638.3,742.7 629,743"/>
<polygon points="637.3,744.5 652,743.8 653.2,759.7 638.5,759"/>
<polygon points="710.8,734.2 727.8,739.5 723.5,753.4 707.6,749"/>
<polygon points="749,727.8 768.3,732 766.1,746 747,742.7"/>
<polygon points="775.7,747 785.3,747.5 785,755.5 775.5,755"/>
<polygon points="752.3,754.4 771.5,758.7 769.3,770.4 750.2,766.1"/>
<polygon points="776.8,758.7 791.7,761.9 789.6,776.8 774.7,773.6"/>
<polygon points="618,750.2 626.6,751.3 625.6,785.3 612.8,784.2 613.8,766.1 618,766.1"/>
<polygon points="639.4,759.7 653.2,760.8 656.4,783.2 637.3,781"/>
<polygon points="670.3,764 679.9,758.7 687.3,759.7 689.5,776.8 693.7,783.2 676.7,784.2"/>
<polygon points="633.7,788 651.4,786.4 653.8,805.5 635.5,806.3"/>
<polygon points="657,787.2 665,783.2 667.4,811.8 662.6,815.8 658.6,805.5"/>
<polygon points="675.6,789.6 682,790 682,802 675.6,802"/>
<polygon points="711.8,794.9 725.7,796 725.7,802 711.8,802"/>
</g>
<g fill="none" stroke="#6b6b6b" stroke-width="3.6" stroke-linejoin="round" stroke-linecap="round">
<path d="M335,295 L356.6,275.1 Q361,271 365.4,267.0 L445.6,194.0 Q450,190 454.3,185.8 L491.6,149.2 Q495.9,145 500.3,141.0 L513.5,129"/>
<path d="M495.9,145 L503,129"/>
<path d="M335,316 L356.6,296.1 Q361,292 365.4,287.9 L465.4,194.1 Q469.8,190 474.1,185.8 L533.4,129"/>
<path d="M471,129 L490.9,141.8 Q496,145 500.8,148.6 L502.8,150.1 Q507.6,153.7 512.7,156.9 L515.9,158.8 Q521,162 526.3,164.8 L555.6,180.1 Q560,182.4 565.0,183.1 L566.0,183.3 Q571,184 576.0,183.5 L593.0,181.6 Q599,181 605.0,180.6 L639,178"/>
<path d="M617,296 L641.3,178.4 Q642.5,172.5 648.5,172.5 L663.3,172.5 Q666,172.5 668.5,173.6 L669.0,173.9 Q671.5,175 672.2,177.6 L672.4,178.3 Q673.2,181 673.2,183.8 L673.2,197.8 Q673.2,203.8 674.7,209.6 L694.0,281.9 Q695.4,287 697.2,291.9 L697.7,293.1 Q699.5,298 702.3,302.5 L710.2,314.9 Q713.4,320 716.7,325.0 L759.5,390.0 Q762.8,395 765.7,400.2 L767.1,402.8 Q770,408 772.0,413.7 L775.2,422.8 Q777.2,428.5 778.2,434.4 L780.0,445.1 Q781,451 780.9,457.0 L780.5,475.0 Q780.4,481 779.3,486.9 L778.1,494.1 Q777,500 776.2,505.9 L772.8,529.1 Q772,535 769.2,540.3 L763.8,550.7 Q761,556 758.0,561.2 L739.0,594.8 Q736,600 732.2,604.6 L716.8,623.1 Q713,627.7 709.3,632.4 L682.5,666.7 Q678.8,671.4 673.4,674.1 L662.9,679.3 Q657.5,682 652.6,685.5 L629.4,701.9 Q624.5,705.4 619.1,708.0 L605.4,714.4 Q600,717 594.5,719.4 L552.8,738"/>
<path d="M739,597 L758.6,647.3 Q759.7,650 760.2,652.9 L760.3,653.5 Q760.8,656.4 760.0,659.2 L730,770.4"/>
<path d="M624.5,705.4 L651.6,726.3 Q656.4,730 661.5,733.2 L694.9,754.4 Q700,757.6 705.5,760.0 L726.8,769.1 Q730,770.4 732.8,772.3 L733.5,772.8 Q736.3,774.7 739.6,775.6 L779.5,785.9 Q785.3,787.4 791.0,785.4 L792.3,785.0 Q798,783 802.5,779.1 L805.0,776.9 Q809.5,773 810.9,767.2 L843.2,629.4 Q844,626 846.7,623.8 L847.3,623.2 Q850,621 853.4,621.9 L874.2,627.5 Q880,629 885.8,630.4 L935,642.5"/>
<path d="M880,629 L850,760"/>
<path d="M656.4,730 L661.3,794.1 Q661.8,800 661.2,805.9 L661.1,807.1 Q660.5,813 658.5,818.5 L646,854"/>
<path d="M700,757.6 L700.5,761.1 Q701,764 701.4,766.9 L704.7,794.0 Q705.4,800 704.9,806.0 L702.5,831.0 Q702,837 700.3,842.7 L684,897"/>
<path d="M650,127 L618.1,290.1 Q617,296 615.9,301.9 L603.1,374.1 Q602,380 601.1,385.9 L565.4,634.1 Q564.5,640 563.9,646.0 L553.4,742.0 Q552.8,748 552.1,754.0 L544.7,813.0 Q544,819 543.1,824.9 L538.9,854.1 Q538,860 536.0,865.7 L529,886"/>
<path d="M601,391 L588.9,389.0 Q583,388 577.6,390.7 L575.5,391.8 Q571,394 570.1,398.9 L569.9,400.1 Q569,405 568.3,410.0 L555.9,493.1 Q555,499 554.1,504.9 L537.6,611.4 Q536.8,616.6 538.1,621.7 L538.9,624.7 Q539.7,628 542.3,630.2 L542.9,630.7 Q545.5,632.9 548.9,633.5 L549.7,633.7 Q553.1,634.3 556.6,634.3 L564.6,634.3"/>
<path d="M555,499 L473.9,487.8 Q468,487 467.0,492.9 L456.8,554.1 Q455.8,560 454.8,565.9 L451.2,587.3 Q450.5,591.6 450.9,595.9 L451.1,596.9 Q451.5,601.2 453.2,605.2 L455.8,611.1 Q458.2,616.6 462.6,620.6 L464.4,622.2 Q468.8,626.2 474.3,628.6 L480.5,631.4 Q486,633.8 491.9,634.6 L501.1,635.9 Q507,636.7 513.0,636.9 L517.4,637.0 Q523.4,637.2 528.6,634.3 L539.7,628"/>
<path d="M577,532 L590.0,530.6 Q596,530 601.5,527.6 L613.5,522.4 Q619,520 623.1,515.6 L628.8,509.3 Q631,507 634.1,506.6 L634.9,506.4 Q638,506 639.6,508.8 L640.2,509.9 Q642,513 641.2,516.5 L639.4,524.2 Q638,530 636.5,535.8 L635.5,540.2 Q634,546 634.6,552.0 L637.4,579.0 Q638,585 639.0,590.9 L639.7,595.2 Q640.5,600 641.4,604.8 L641.7,605.8 Q642.6,610.6 646.0,614.1 L650.1,618.1 Q654.3,622.4 654.4,628.4 L655.4,682"/>
<path d="M674,517 L670.7,522.5 Q668,527 667.6,532.2 L664.5,568.0 Q664,574 663.2,579.9 L660.8,598.1 Q660,604 658.0,609.7 L654,621"/>
<path d="M699,523 L742.0,464.8 Q745.6,460 749.8,455.8 L777.2,428.5"/>
<path d="M851,298 L847.7,302.4 Q845,306 842.0,309.3 L818.5,335.5 Q814.5,340 810.3,344.3 L804.2,350.4 Q800,354.7 795.9,359.1 L762.8,395"/>
<path d="M901.4,348.5 L780.4,481.4"/>
<path d="M772,535 L776.5,528.9 Q780,524 784.2,519.7 L792.1,511.3 Q796.3,507 800.9,503.2 L811.6,494.5 Q816.2,490.7 821.3,487.5 L834.6,479.4 Q839.7,476.2 845.2,473.8 L859.5,467.7 Q865,465.3 870.7,463.4 L883.0,459.1 Q888.7,457.2 894.7,456.6 L900.7,456.0 Q906.7,455.4 912.5,456.9 L919.0,458.5 Q924.8,460 930.1,462.7 L963.1,479.5 Q968,482 973.4,480.9 L975.4,480.5 Q980,479.5 984.2,477.5 L985.2,477.0 Q989.4,475 992.3,471.3 L1005.6,454.3 Q1009.3,449.6 1013.1,445.0 L1034.9,418.4"/>
<path d="M870.7,462 L874.9,470.6 Q877.6,476 877.2,482.0 L876.4,494.0 Q876,500 874.4,505.8 L856,574"/>
<path d="M551,751 L526.7,743.7 Q521,742 515.4,739.9 L507.6,737.1 Q502,735 496.1,734.1 L493.9,733.7 Q488,732.8 482.0,733.2 L478.0,733.6 Q472,734 466.4,736.3 L461.8,738.2 Q458,739.7 454.9,742.3 L454.1,742.9 Q451,745.5 449.1,749.1 L425.0,796.7 Q422.3,802 419.5,807.3 L412.4,821.1 Q409.6,826.4 408.3,832.3 L406.3,841.1 Q405,847 404.9,853.0 L404,910"/>
<path d="M422.3,802 L419.7,796.3 Q417.6,791.7 417.7,786.6 L417.9,776.0 Q418,770 419.2,764.1 L421.1,754.7 Q422,750 418.4,746.9 L417.6,746.1 Q414,743 409.3,742.2 L388.7,738.6"/>
<path d="M355,840.6 L358.3,841.7 Q361,842.6 363.7,843.5 L405,856.5"/>
</g>
<g font-family="Liberation Sans, sans-serif" font-size="14" fill="#000" stroke="#000" stroke-width="0.2">
<text x="485" y="148" transform="rotate(-48 485 148)" text-anchor="middle" dominant-baseline="central" textLength="40" lengthAdjust="spacingAndGlyphs">Nó de ’</text>
<text x="399" y="246" transform="rotate(-42.5 399 246)" text-anchor="middle" dominant-baseline="central" textLength="126" lengthAdjust="spacingAndGlyphs">Circular Sul de Braga</text>
<text x="562" y="162" transform="rotate(14.5 562 162)" text-anchor="middle" dominant-baseline="central" textLength="90" lengthAdjust="spacingAndGlyphs">Rua do Cruzeiro</text>
<text x="625.5" y="206" transform="rotate(-79 625.5 206)" text-anchor="middle" dominant-baseline="central" textLength="149" lengthAdjust="spacingAndGlyphs">Avenida da Independência</text>
<text x="681.5" y="225.8" transform="rotate(71 681.5 225.8)" text-anchor="middle" dominant-baseline="central" textLength="121" lengthAdjust="spacingAndGlyphs">Rua da Foz Rua da Foz</text>
<text x="800.5" y="343.5" transform="rotate(-46.5 800.5 343.5)" text-anchor="middle" dominant-baseline="central" textLength="84" lengthAdjust="spacingAndGlyphs">Rua da Encosta</text>
<text x="833.5" y="412.5" transform="rotate(-47 833.5 412.5)" text-anchor="middle" dominant-baseline="central" textLength="76" lengthAdjust="spacingAndGlyphs">Rua do Monte</text>
<text x="992.5" y="437.5" transform="rotate(-32 992.5 437.5)" text-anchor="middle" dominant-baseline="central" textLength="112" lengthAdjust="spacingAndGlyphs">Rua de Santa Marta</text>
<text x="854.5" y="518.5" transform="rotate(-84 854.5 518.5)" text-anchor="middle" dominant-baseline="central" textLength="139" lengthAdjust="spacingAndGlyphs">Travessa de Santa Marta</text>
<text x="730.5" y="470" transform="rotate(-48.5 730.5 470)" text-anchor="middle" dominant-baseline="central" textLength="90" lengthAdjust="spacingAndGlyphs">Rua da Belavista</text>
<text x="751" y="553" transform="rotate(-64 751 553)" text-anchor="middle" dominant-baseline="central" textLength="78" lengthAdjust="spacingAndGlyphs">Rua de Barros</text>
<text x="518.5" y="644" transform="rotate(-77.5 518.5 644)" text-anchor="middle" dominant-baseline="central" textLength="292" lengthAdjust="spacingAndGlyphs">Arruamento Privado - Centro Empresarial de Arcos</text>
<text x="569.8" y="537" transform="rotate(-81.7 569.8 537)" text-anchor="middle" dominant-baseline="central" textLength="292" lengthAdjust="spacingAndGlyphs">Arruamento Privado - Centro Empresarial de Arcos</text>
<text x="655" y="595" transform="rotate(82.8 655 595)" text-anchor="middle" dominant-baseline="central" textLength="145" lengthAdjust="spacingAndGlyphs">Rua do Tanque de Barros</text>
<text x="455" y="755" transform="rotate(-45 455 755)" text-anchor="middle" dominant-baseline="central" textLength="80" lengthAdjust="spacingAndGlyphs">Rua da Correia</text>
<text x="383" y="840" transform="rotate(19 383 840)" text-anchor="middle" dominant-baseline="central" textLength="108" lengthAdjust="spacingAndGlyphs">Rua do Ribeirinho</text>
<text x="646" y="793" transform="rotate(-83 646 793)" text-anchor="middle" dominant-baseline="central" textLength="119" lengthAdjust="spacingAndGlyphs">Rua Padre Brito Silva</text>
<text x="686" y="827" transform="rotate(-82 686 827)" text-anchor="middle" dominant-baseline="central" textLength="150" lengthAdjust="spacingAndGlyphs">Rua do Parque Desportivo</text>
<text x="738.5" y="689.5" transform="rotate(-80 738.5 689.5)" text-anchor="middle" dominant-baseline="central" textLength="106" lengthAdjust="spacingAndGlyphs">Travessa de Barros</text>
<text x="811.6" y="709.2" transform="rotate(-73.4 811.6 709.2)" text-anchor="middle" dominant-baseline="central" textLength="148" lengthAdjust="spacingAndGlyphs">Rua do Parque Desportivo</text>
<text x="857.7" y="692.8" transform="rotate(-76.6 857.7 692.8)" text-anchor="middle" dominant-baseline="central" textLength="108" lengthAdjust="spacingAndGlyphs">Rua de São Vicente</text>
<text x="1263" y="457.5" font-size="13.5" stroke="none" textLength="310" lengthAdjust="spacingAndGlyphs">União das freguesias de Nogueira, Fraião e Lamações</text>
<text x="1284.2" y="851.7" font-size="13.5" stroke="none" textLength="53" lengthAdjust="spacingAndGlyphs">Esporões</text>
</g>
<rect x="361.5" y="130.5" width="1271" height="777" fill="none" stroke="#aca7a2" stroke-width="1"/>
</svg>
</div></body></html>
